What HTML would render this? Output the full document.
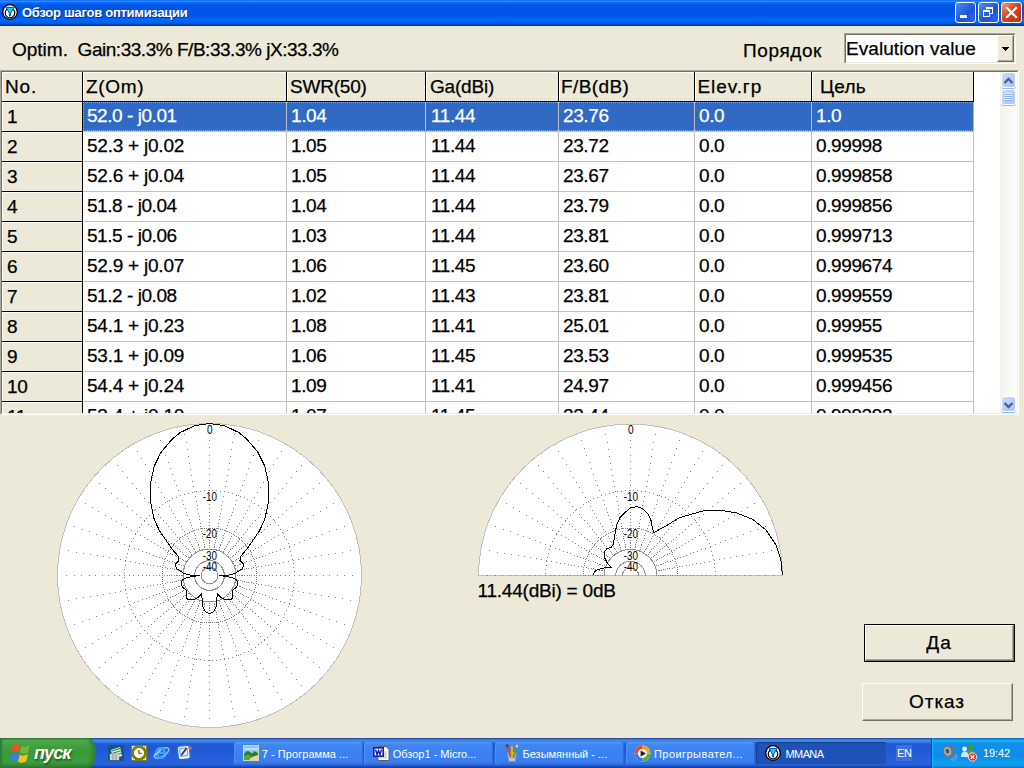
<!DOCTYPE html>
<html><head><meta charset="utf-8"><title>MMANA</title>
<style>
*{box-sizing:border-box;margin:0;padding:0}
html,body{width:1024px;height:768px;overflow:hidden;background:#ECE9D8;font-family:"Liberation Sans",sans-serif;color:#000}
div,span,svg{position:absolute}
.t{white-space:nowrap;font-size:19px;line-height:22px;letter-spacing:-0.4px;-webkit-text-stroke:0.25px currentColor}
#title{left:0;top:0;width:1024px;height:26px;background:linear-gradient(to bottom,#0058ee 0%,#3593ff 4%,#288eff 6%,#127dff 8%,#036ffc 10%,#0262ee 14%,#0057e5 20%,#0054e3 24%,#0055eb 56%,#005bf5 66%,#026afe 76%,#0062ef 86%,#0052d6 92%,#0040ab 96%,#003092 100%)}
#title .tt{left:22px;top:5px;font-weight:bold;font-size:13px;line-height:16px;color:#fff;white-space:nowrap;text-shadow:1px 1px 0 #0F2F86;letter-spacing:-0.27px}
.cb{top:2px;width:21px;height:21px;border:1px solid #fff;border-radius:3px}
#grid{left:0;top:70px;width:1019px;height:345px;background:#fff;border-top:1px solid #ACA899;border-left:1px solid #ACA899;border-bottom:1px solid #fff;border-right:1px solid #fff;overflow:hidden}
#gi{left:0;top:0;width:1017px;height:343px;border-top:1px solid #716F64;border-left:1px solid #716F64;border-right:1px solid #F1EFE2;border-bottom:1px solid #F1EFE2;overflow:hidden;background:#fff}
.hc{background:#ECE9D8;border-top:1px solid #fff;border-left:1px solid #fff;overflow:hidden}
.hc .t,.c .t{left:3px;top:3px}
.c{overflow:hidden}
.bl{background:#000}
.gl{background:#C0C0C0}
.btn{background:#ECE9D8;border:1px solid;border-color:#fff #716F64 #716F64 #fff;box-shadow:inset -1px -1px 0 #ACA899}
.btn .t{left:0;right:0;text-align:center}
</style></head><body>

<div id="title"><div class="tt">Обзор шагов оптимизации</div>
<svg style="left:2px;top:4px" width="16" height="16" viewBox="0 0 16 16"><circle cx="8" cy="8" r="7.3" fill="#fff" stroke="#000" stroke-width="1.3"/><circle cx="8" cy="9" r="4.8" fill="none" stroke="#000" stroke-width="1.2"/><path d="M4 3.4h8L8.7 9v3H7.3V9z" fill="#00E0E8" stroke="#1030D0" stroke-width="0.9"/></svg>
<div class="cb" style="left:955px;background:linear-gradient(135deg,#4A8CF8,#1C54D8 60%,#2F6AF0)"><div style="left:4px;top:12px;width:7px;height:3px;background:#fff"></div></div>
<div class="cb" style="left:978px;background:linear-gradient(135deg,#4A8CF8,#1C54D8 60%,#2F6AF0)"><div style="left:7px;top:4px;width:7px;height:7px;border:1px solid #fff;border-top-width:2px"></div><div style="left:4px;top:7px;width:7px;height:7px;border:1px solid #fff;border-top-width:2px;background:#2A60E0"></div></div>
<div class="cb" style="left:1001px;background:linear-gradient(135deg,#F0A080,#D8441C 45%,#C03010)"><svg style="left:0;top:0" width="19" height="19"><path d="M5 5L14 14M14 5L5 14" stroke="#fff" stroke-width="2.2" stroke-linecap="square"/></svg></div>
</div>
<div class="t" style="left:12px;top:39px;letter-spacing:-0.47px"><span style="position:static;letter-spacing:0">Optim.</span>&nbsp; Gain:33.3% F/B:33.3% jX:33.3%</div>
<div class="t" style="left:743px;top:40px;letter-spacing:0.6px">Порядок</div>
<div style="left:844px;top:33px;width:172px;height:31px;background:#fff;border:1px solid;border-color:#ACA899 #fff #fff #ACA899"><div style="left:0;top:0;width:170px;height:29px;border:1px solid;border-color:#716F64 #ECE9D8 #ECE9D8 #716F64"></div><div class="t" style="left:1px;top:4px;letter-spacing:0.06px">Evalution value</div><div class="btn" style="left:152px;top:1px;width:17px;height:27px"><svg style="left:4px;top:11px" width="7" height="4" shape-rendering="crispEdges"><path d="M0 0h7v1h-1v1h-1v1h-1v1h-1v-1h-1v-1h-1v-1h-1z" fill="#000"/></svg></div></div>
<div id="grid"><div id="gi">
<div class="hc" style="left:0px;top:0px;width:80px;height:29px;"><div class="t" style="left:2px;letter-spacing:0.8px">No.</div></div>
<div class="bl" style="left:80px;top:0px;width:1px;height:30px;"></div>
<div class="hc" style="left:81px;top:0px;width:203px;height:29px;"><div class="t" style="left:2px;letter-spacing:0.7px">Z(Om)</div></div>
<div class="bl" style="left:284px;top:0px;width:1px;height:30px;"></div>
<div class="hc" style="left:285px;top:0px;width:138px;height:29px;"><div class="t" style="left:2px;letter-spacing:-0.2px">SWR(50)</div></div>
<div class="bl" style="left:423px;top:0px;width:1px;height:30px;"></div>
<div class="hc" style="left:424px;top:0px;width:132px;height:29px;"><div class="t" style="left:3px;letter-spacing:-0.2px">Ga(dBi)</div></div>
<div class="bl" style="left:556px;top:0px;width:1px;height:30px;"></div>
<div class="hc" style="left:557px;top:0px;width:135px;height:29px;"><div class="t" style="left:1px;letter-spacing:0.4px">F/B(dB)</div></div>
<div class="bl" style="left:692px;top:0px;width:1px;height:30px;"></div>
<div class="hc" style="left:693px;top:0px;width:116px;height:29px;"><div class="t" style="left:1.5px;letter-spacing:0.9px">Elev.гр</div></div>
<div class="bl" style="left:809px;top:0px;width:1px;height:30px;"></div>
<div class="hc" style="left:810px;top:0px;width:161px;height:29px;"><div class="t" style="left:7px;letter-spacing:0.2px">Цель</div></div>
<div class="bl" style="left:971px;top:0px;width:1px;height:30px;"></div>
<div class="bl" style="left:0px;top:29px;width:972px;height:1px;"></div>
<div class="hc" style="left:0px;top:30px;width:80px;height:29px;"><div class="t" style="left:4px">1</div></div>
<div class="bl" style="left:80px;top:30px;width:1px;height:30px;"></div>
<div class="bl" style="left:0px;top:59px;width:81px;height:1px;"></div>
<div class="c" style="left:81px;top:30px;width:203px;height:29px;background:#316AC5;color:#fff;"><div class="t" style="left:4px;letter-spacing:-0.45px;">52.0 - j0.01</div></div>
<div class="gl" style="left:284px;top:30px;width:1px;height:30px;"></div>
<div class="c" style="left:285px;top:30px;width:138px;height:29px;background:#316AC5;color:#fff;"><div class="t" style="left:4px;">1.04</div></div>
<div class="gl" style="left:423px;top:30px;width:1px;height:30px;"></div>
<div class="c" style="left:424px;top:30px;width:132px;height:29px;background:#316AC5;color:#fff;"><div class="t" style="left:5px;">11.44</div></div>
<div class="gl" style="left:556px;top:30px;width:1px;height:30px;"></div>
<div class="c" style="left:557px;top:30px;width:135px;height:29px;background:#316AC5;color:#fff;"><div class="t" style="left:4px;">23.76</div></div>
<div class="gl" style="left:692px;top:30px;width:1px;height:30px;"></div>
<div class="c" style="left:693px;top:30px;width:116px;height:29px;background:#316AC5;color:#fff;"><div class="t" style="left:4px;">0.0</div></div>
<div class="gl" style="left:809px;top:30px;width:1px;height:30px;"></div>
<div class="c" style="left:810px;top:30px;width:161px;height:29px;background:#316AC5;color:#fff;"><div class="t" style="left:4px;">1.0</div></div>
<div class="gl" style="left:971px;top:30px;width:1px;height:30px;"></div>
<div class="gl" style="left:81px;top:59px;width:891px;height:1px;"></div>
<div class="" style="left:81px;top:30px;width:891px;height:29px;border:1px dotted #E8A040;"></div>
<div class="hc" style="left:0px;top:60px;width:80px;height:29px;"><div class="t" style="left:4px">2</div></div>
<div class="bl" style="left:80px;top:60px;width:1px;height:30px;"></div>
<div class="bl" style="left:0px;top:89px;width:81px;height:1px;"></div>
<div class="c" style="left:81px;top:60px;width:203px;height:29px;"><div class="t" style="left:4px;letter-spacing:-0.23px;">52.3 + j0.02</div></div>
<div class="gl" style="left:284px;top:60px;width:1px;height:30px;"></div>
<div class="c" style="left:285px;top:60px;width:138px;height:29px;"><div class="t" style="left:4px;">1.05</div></div>
<div class="gl" style="left:423px;top:60px;width:1px;height:30px;"></div>
<div class="c" style="left:424px;top:60px;width:132px;height:29px;"><div class="t" style="left:5px;">11.44</div></div>
<div class="gl" style="left:556px;top:60px;width:1px;height:30px;"></div>
<div class="c" style="left:557px;top:60px;width:135px;height:29px;"><div class="t" style="left:4px;">23.72</div></div>
<div class="gl" style="left:692px;top:60px;width:1px;height:30px;"></div>
<div class="c" style="left:693px;top:60px;width:116px;height:29px;"><div class="t" style="left:4px;">0.0</div></div>
<div class="gl" style="left:809px;top:60px;width:1px;height:30px;"></div>
<div class="c" style="left:810px;top:60px;width:161px;height:29px;"><div class="t" style="left:4px;">0.99998</div></div>
<div class="gl" style="left:971px;top:60px;width:1px;height:30px;"></div>
<div class="gl" style="left:81px;top:89px;width:891px;height:1px;"></div>
<div class="hc" style="left:0px;top:90px;width:80px;height:29px;"><div class="t" style="left:4px">3</div></div>
<div class="bl" style="left:80px;top:90px;width:1px;height:30px;"></div>
<div class="bl" style="left:0px;top:119px;width:81px;height:1px;"></div>
<div class="c" style="left:81px;top:90px;width:203px;height:29px;"><div class="t" style="left:4px;letter-spacing:-0.23px;">52.6 + j0.04</div></div>
<div class="gl" style="left:284px;top:90px;width:1px;height:30px;"></div>
<div class="c" style="left:285px;top:90px;width:138px;height:29px;"><div class="t" style="left:4px;">1.05</div></div>
<div class="gl" style="left:423px;top:90px;width:1px;height:30px;"></div>
<div class="c" style="left:424px;top:90px;width:132px;height:29px;"><div class="t" style="left:5px;">11.44</div></div>
<div class="gl" style="left:556px;top:90px;width:1px;height:30px;"></div>
<div class="c" style="left:557px;top:90px;width:135px;height:29px;"><div class="t" style="left:4px;">23.67</div></div>
<div class="gl" style="left:692px;top:90px;width:1px;height:30px;"></div>
<div class="c" style="left:693px;top:90px;width:116px;height:29px;"><div class="t" style="left:4px;">0.0</div></div>
<div class="gl" style="left:809px;top:90px;width:1px;height:30px;"></div>
<div class="c" style="left:810px;top:90px;width:161px;height:29px;"><div class="t" style="left:4px;">0.999858</div></div>
<div class="gl" style="left:971px;top:90px;width:1px;height:30px;"></div>
<div class="gl" style="left:81px;top:119px;width:891px;height:1px;"></div>
<div class="hc" style="left:0px;top:120px;width:80px;height:29px;"><div class="t" style="left:4px">4</div></div>
<div class="bl" style="left:80px;top:120px;width:1px;height:30px;"></div>
<div class="bl" style="left:0px;top:149px;width:81px;height:1px;"></div>
<div class="c" style="left:81px;top:120px;width:203px;height:29px;"><div class="t" style="left:4px;letter-spacing:-0.45px;">51.8 - j0.04</div></div>
<div class="gl" style="left:284px;top:120px;width:1px;height:30px;"></div>
<div class="c" style="left:285px;top:120px;width:138px;height:29px;"><div class="t" style="left:4px;">1.04</div></div>
<div class="gl" style="left:423px;top:120px;width:1px;height:30px;"></div>
<div class="c" style="left:424px;top:120px;width:132px;height:29px;"><div class="t" style="left:5px;">11.44</div></div>
<div class="gl" style="left:556px;top:120px;width:1px;height:30px;"></div>
<div class="c" style="left:557px;top:120px;width:135px;height:29px;"><div class="t" style="left:4px;">23.79</div></div>
<div class="gl" style="left:692px;top:120px;width:1px;height:30px;"></div>
<div class="c" style="left:693px;top:120px;width:116px;height:29px;"><div class="t" style="left:4px;">0.0</div></div>
<div class="gl" style="left:809px;top:120px;width:1px;height:30px;"></div>
<div class="c" style="left:810px;top:120px;width:161px;height:29px;"><div class="t" style="left:4px;">0.999856</div></div>
<div class="gl" style="left:971px;top:120px;width:1px;height:30px;"></div>
<div class="gl" style="left:81px;top:149px;width:891px;height:1px;"></div>
<div class="hc" style="left:0px;top:150px;width:80px;height:29px;"><div class="t" style="left:4px">5</div></div>
<div class="bl" style="left:80px;top:150px;width:1px;height:30px;"></div>
<div class="bl" style="left:0px;top:179px;width:81px;height:1px;"></div>
<div class="c" style="left:81px;top:150px;width:203px;height:29px;"><div class="t" style="left:4px;letter-spacing:-0.45px;">51.5 - j0.06</div></div>
<div class="gl" style="left:284px;top:150px;width:1px;height:30px;"></div>
<div class="c" style="left:285px;top:150px;width:138px;height:29px;"><div class="t" style="left:4px;">1.03</div></div>
<div class="gl" style="left:423px;top:150px;width:1px;height:30px;"></div>
<div class="c" style="left:424px;top:150px;width:132px;height:29px;"><div class="t" style="left:5px;">11.44</div></div>
<div class="gl" style="left:556px;top:150px;width:1px;height:30px;"></div>
<div class="c" style="left:557px;top:150px;width:135px;height:29px;"><div class="t" style="left:4px;">23.81</div></div>
<div class="gl" style="left:692px;top:150px;width:1px;height:30px;"></div>
<div class="c" style="left:693px;top:150px;width:116px;height:29px;"><div class="t" style="left:4px;">0.0</div></div>
<div class="gl" style="left:809px;top:150px;width:1px;height:30px;"></div>
<div class="c" style="left:810px;top:150px;width:161px;height:29px;"><div class="t" style="left:4px;">0.999713</div></div>
<div class="gl" style="left:971px;top:150px;width:1px;height:30px;"></div>
<div class="gl" style="left:81px;top:179px;width:891px;height:1px;"></div>
<div class="hc" style="left:0px;top:180px;width:80px;height:29px;"><div class="t" style="left:4px">6</div></div>
<div class="bl" style="left:80px;top:180px;width:1px;height:30px;"></div>
<div class="bl" style="left:0px;top:209px;width:81px;height:1px;"></div>
<div class="c" style="left:81px;top:180px;width:203px;height:29px;"><div class="t" style="left:4px;letter-spacing:-0.23px;">52.9 + j0.07</div></div>
<div class="gl" style="left:284px;top:180px;width:1px;height:30px;"></div>
<div class="c" style="left:285px;top:180px;width:138px;height:29px;"><div class="t" style="left:4px;">1.06</div></div>
<div class="gl" style="left:423px;top:180px;width:1px;height:30px;"></div>
<div class="c" style="left:424px;top:180px;width:132px;height:29px;"><div class="t" style="left:5px;">11.45</div></div>
<div class="gl" style="left:556px;top:180px;width:1px;height:30px;"></div>
<div class="c" style="left:557px;top:180px;width:135px;height:29px;"><div class="t" style="left:4px;">23.60</div></div>
<div class="gl" style="left:692px;top:180px;width:1px;height:30px;"></div>
<div class="c" style="left:693px;top:180px;width:116px;height:29px;"><div class="t" style="left:4px;">0.0</div></div>
<div class="gl" style="left:809px;top:180px;width:1px;height:30px;"></div>
<div class="c" style="left:810px;top:180px;width:161px;height:29px;"><div class="t" style="left:4px;">0.999674</div></div>
<div class="gl" style="left:971px;top:180px;width:1px;height:30px;"></div>
<div class="gl" style="left:81px;top:209px;width:891px;height:1px;"></div>
<div class="hc" style="left:0px;top:210px;width:80px;height:29px;"><div class="t" style="left:4px">7</div></div>
<div class="bl" style="left:80px;top:210px;width:1px;height:30px;"></div>
<div class="bl" style="left:0px;top:239px;width:81px;height:1px;"></div>
<div class="c" style="left:81px;top:210px;width:203px;height:29px;"><div class="t" style="left:4px;letter-spacing:-0.45px;">51.2 - j0.08</div></div>
<div class="gl" style="left:284px;top:210px;width:1px;height:30px;"></div>
<div class="c" style="left:285px;top:210px;width:138px;height:29px;"><div class="t" style="left:4px;">1.02</div></div>
<div class="gl" style="left:423px;top:210px;width:1px;height:30px;"></div>
<div class="c" style="left:424px;top:210px;width:132px;height:29px;"><div class="t" style="left:5px;">11.43</div></div>
<div class="gl" style="left:556px;top:210px;width:1px;height:30px;"></div>
<div class="c" style="left:557px;top:210px;width:135px;height:29px;"><div class="t" style="left:4px;">23.81</div></div>
<div class="gl" style="left:692px;top:210px;width:1px;height:30px;"></div>
<div class="c" style="left:693px;top:210px;width:116px;height:29px;"><div class="t" style="left:4px;">0.0</div></div>
<div class="gl" style="left:809px;top:210px;width:1px;height:30px;"></div>
<div class="c" style="left:810px;top:210px;width:161px;height:29px;"><div class="t" style="left:4px;">0.999559</div></div>
<div class="gl" style="left:971px;top:210px;width:1px;height:30px;"></div>
<div class="gl" style="left:81px;top:239px;width:891px;height:1px;"></div>
<div class="hc" style="left:0px;top:240px;width:80px;height:29px;"><div class="t" style="left:4px">8</div></div>
<div class="bl" style="left:80px;top:240px;width:1px;height:30px;"></div>
<div class="bl" style="left:0px;top:269px;width:81px;height:1px;"></div>
<div class="c" style="left:81px;top:240px;width:203px;height:29px;"><div class="t" style="left:4px;letter-spacing:-0.23px;">54.1 + j0.23</div></div>
<div class="gl" style="left:284px;top:240px;width:1px;height:30px;"></div>
<div class="c" style="left:285px;top:240px;width:138px;height:29px;"><div class="t" style="left:4px;">1.08</div></div>
<div class="gl" style="left:423px;top:240px;width:1px;height:30px;"></div>
<div class="c" style="left:424px;top:240px;width:132px;height:29px;"><div class="t" style="left:5px;">11.41</div></div>
<div class="gl" style="left:556px;top:240px;width:1px;height:30px;"></div>
<div class="c" style="left:557px;top:240px;width:135px;height:29px;"><div class="t" style="left:4px;">25.01</div></div>
<div class="gl" style="left:692px;top:240px;width:1px;height:30px;"></div>
<div class="c" style="left:693px;top:240px;width:116px;height:29px;"><div class="t" style="left:4px;">0.0</div></div>
<div class="gl" style="left:809px;top:240px;width:1px;height:30px;"></div>
<div class="c" style="left:810px;top:240px;width:161px;height:29px;"><div class="t" style="left:4px;">0.99955</div></div>
<div class="gl" style="left:971px;top:240px;width:1px;height:30px;"></div>
<div class="gl" style="left:81px;top:269px;width:891px;height:1px;"></div>
<div class="hc" style="left:0px;top:270px;width:80px;height:29px;"><div class="t" style="left:4px">9</div></div>
<div class="bl" style="left:80px;top:270px;width:1px;height:30px;"></div>
<div class="bl" style="left:0px;top:299px;width:81px;height:1px;"></div>
<div class="c" style="left:81px;top:270px;width:203px;height:29px;"><div class="t" style="left:4px;letter-spacing:-0.23px;">53.1 + j0.09</div></div>
<div class="gl" style="left:284px;top:270px;width:1px;height:30px;"></div>
<div class="c" style="left:285px;top:270px;width:138px;height:29px;"><div class="t" style="left:4px;">1.06</div></div>
<div class="gl" style="left:423px;top:270px;width:1px;height:30px;"></div>
<div class="c" style="left:424px;top:270px;width:132px;height:29px;"><div class="t" style="left:5px;">11.45</div></div>
<div class="gl" style="left:556px;top:270px;width:1px;height:30px;"></div>
<div class="c" style="left:557px;top:270px;width:135px;height:29px;"><div class="t" style="left:4px;">23.53</div></div>
<div class="gl" style="left:692px;top:270px;width:1px;height:30px;"></div>
<div class="c" style="left:693px;top:270px;width:116px;height:29px;"><div class="t" style="left:4px;">0.0</div></div>
<div class="gl" style="left:809px;top:270px;width:1px;height:30px;"></div>
<div class="c" style="left:810px;top:270px;width:161px;height:29px;"><div class="t" style="left:4px;">0.999535</div></div>
<div class="gl" style="left:971px;top:270px;width:1px;height:30px;"></div>
<div class="gl" style="left:81px;top:299px;width:891px;height:1px;"></div>
<div class="hc" style="left:0px;top:300px;width:80px;height:29px;"><div class="t" style="left:4px">10</div></div>
<div class="bl" style="left:80px;top:300px;width:1px;height:30px;"></div>
<div class="bl" style="left:0px;top:329px;width:81px;height:1px;"></div>
<div class="c" style="left:81px;top:300px;width:203px;height:29px;"><div class="t" style="left:4px;letter-spacing:-0.23px;">54.4 + j0.24</div></div>
<div class="gl" style="left:284px;top:300px;width:1px;height:30px;"></div>
<div class="c" style="left:285px;top:300px;width:138px;height:29px;"><div class="t" style="left:4px;">1.09</div></div>
<div class="gl" style="left:423px;top:300px;width:1px;height:30px;"></div>
<div class="c" style="left:424px;top:300px;width:132px;height:29px;"><div class="t" style="left:5px;">11.41</div></div>
<div class="gl" style="left:556px;top:300px;width:1px;height:30px;"></div>
<div class="c" style="left:557px;top:300px;width:135px;height:29px;"><div class="t" style="left:4px;">24.97</div></div>
<div class="gl" style="left:692px;top:300px;width:1px;height:30px;"></div>
<div class="c" style="left:693px;top:300px;width:116px;height:29px;"><div class="t" style="left:4px;">0.0</div></div>
<div class="gl" style="left:809px;top:300px;width:1px;height:30px;"></div>
<div class="c" style="left:810px;top:300px;width:161px;height:29px;"><div class="t" style="left:4px;">0.999456</div></div>
<div class="gl" style="left:971px;top:300px;width:1px;height:30px;"></div>
<div class="gl" style="left:81px;top:329px;width:891px;height:1px;"></div>
<div class="hc" style="left:0px;top:330px;width:80px;height:29px;"><div class="t" style="left:4px">11</div></div>
<div class="bl" style="left:80px;top:330px;width:1px;height:30px;"></div>
<div class="bl" style="left:0px;top:359px;width:81px;height:1px;"></div>
<div class="c" style="left:81px;top:330px;width:203px;height:29px;"><div class="t" style="left:4px;letter-spacing:-0.23px;">53.4 + j0.10</div></div>
<div class="gl" style="left:284px;top:330px;width:1px;height:30px;"></div>
<div class="c" style="left:285px;top:330px;width:138px;height:29px;"><div class="t" style="left:4px;">1.07</div></div>
<div class="gl" style="left:423px;top:330px;width:1px;height:30px;"></div>
<div class="c" style="left:424px;top:330px;width:132px;height:29px;"><div class="t" style="left:5px;">11.45</div></div>
<div class="gl" style="left:556px;top:330px;width:1px;height:30px;"></div>
<div class="c" style="left:557px;top:330px;width:135px;height:29px;"><div class="t" style="left:4px;">23.44</div></div>
<div class="gl" style="left:692px;top:330px;width:1px;height:30px;"></div>
<div class="c" style="left:693px;top:330px;width:116px;height:29px;"><div class="t" style="left:4px;">0.0</div></div>
<div class="gl" style="left:809px;top:330px;width:1px;height:30px;"></div>
<div class="c" style="left:810px;top:330px;width:161px;height:29px;"><div class="t" style="left:4px;">0.999393</div></div>
<div class="gl" style="left:971px;top:330px;width:1px;height:30px;"></div>
<div class="gl" style="left:81px;top:359px;width:891px;height:1px;"></div>
</div>
<div style="left:999px;top:1px;width:17px;height:341px;background:linear-gradient(to right,#F3F1EC,#FEFEFB)"></div>
<div style="left:1000px;top:1px;width:15px;height:16px;border:1px solid #fff;border-radius:3px;background:linear-gradient(135deg,#CCDAFD,#BBCDF9 50%,#AEC4F5);box-shadow:0 1px 0 #9DB6EA"><svg style="left:1px;top:4px" width="11" height="8"><path d="M1.5 6L5.5 2L9.5 6" fill="none" stroke="#4D6185" stroke-width="2.4"/></svg></div>
<div style="left:1000px;top:18px;width:15px;height:16px;border:1px solid #fff;border-radius:3px;background:linear-gradient(135deg,#CCDAFD,#BBCDF9 50%,#AEC4F5);box-shadow:0 1px 0 #9DB6EA"><div style="left:3px;top:3px;width:7px;height:1px;background:#EEF4FE;box-shadow:0 1px 0 #8CB0F8,0 2px 0 #EEF4FE,0 3px 0 #8CB0F8,0 4px 0 #EEF4FE,0 5px 0 #8CB0F8,0 6px 0 #EEF4FE,0 7px 0 #8CB0F8"></div></div>
<div style="left:1000px;top:325px;width:15px;height:16px;border:1px solid #fff;border-radius:3px;background:linear-gradient(135deg,#CCDAFD,#BBCDF9 50%,#AEC4F5);box-shadow:0 1px 0 #9DB6EA"><svg style="left:1px;top:4px" width="11" height="8"><path d="M1.5 2L5.5 6L9.5 2" fill="none" stroke="#4D6185" stroke-width="2.4"/></svg></div>
</div>
<svg style="left:56px;top:422px" width="307" height="307" viewBox="56 422 307 307" shape-rendering="crispEdges"><circle cx="209.5" cy="575.5" r="152" fill="#fff" stroke="#C0C0C0" stroke-width="1"/><path d="M352 575h1v1h-1zM344 575h1v1h-1zM337 575h1v1h-1zM329 575h1v1h-1zM323 575h1v1h-1zM316 575h1v1h-1zM310 575h1v1h-1zM304 575h1v1h-1zM299 575h1v1h-1zM294 575h1v1h-1zM289 575h1v1h-1zM285 575h1v1h-1zM280 575h1v1h-1zM276 575h1v1h-1zM272 575h1v1h-1zM269 575h1v1h-1zM265 575h1v1h-1zM262 575h1v1h-1zM259 575h1v1h-1zM256 575h1v1h-1zM254 575h1v1h-1zM251 575h1v1h-1zM249 575h1v1h-1zM247 575h1v1h-1zM244 575h1v1h-1zM242 575h1v1h-1zM241 575h1v1h-1zM239 575h1v1h-1zM237 575h1v1h-1zM235 575h1v1h-1zM350 550h1v1h-1zM342 552h1v1h-1zM335 553h1v1h-1zM328 554h1v1h-1zM321 555h1v1h-1zM315 556h1v1h-1zM309 557h1v1h-1zM303 558h1v1h-1zM298 559h1v1h-1zM293 560h1v1h-1zM288 561h1v1h-1zM283 562h1v1h-1zM279 563h1v1h-1zM275 563h1v1h-1zM271 564h1v1h-1zM268 565h1v1h-1zM265 565h1v1h-1zM261 566h1v1h-1zM258 566h1v1h-1zM256 567h1v1h-1zM253 567h1v1h-1zM251 568h1v1h-1zM248 568h1v1h-1zM246 568h1v1h-1zM244 569h1v1h-1zM242 569h1v1h-1zM240 570h1v1h-1zM238 570h1v1h-1zM237 570h1v1h-1zM235 570h1v1h-1zM344 526h1v1h-1zM336 529h1v1h-1zM329 531h1v1h-1zM322 534h1v1h-1zM316 536h1v1h-1zM310 538h1v1h-1zM304 540h1v1h-1zM299 542h1v1h-1zM294 544h1v1h-1zM289 546h1v1h-1zM284 548h1v1h-1zM280 549h1v1h-1zM276 551h1v1h-1zM272 552h1v1h-1zM269 553h1v1h-1zM265 555h1v1h-1zM262 556h1v1h-1zM259 557h1v1h-1zM256 558h1v1h-1zM254 559h1v1h-1zM251 560h1v1h-1zM249 561h1v1h-1zM246 561h1v1h-1zM244 562h1v1h-1zM242 563h1v1h-1zM240 564h1v1h-1zM239 564h1v1h-1zM237 565h1v1h-1zM235 565h1v1h-1zM234 566h1v1h-1zM333 503h1v1h-1zM326 507h1v1h-1zM320 511h1v1h-1zM313 515h1v1h-1zM307 518h1v1h-1zM302 521h1v1h-1zM297 524h1v1h-1zM292 527h1v1h-1zM287 530h1v1h-1zM283 533h1v1h-1zM278 535h1v1h-1zM274 537h1v1h-1zM271 539h1v1h-1zM267 541h1v1h-1zM264 543h1v1h-1zM261 545h1v1h-1zM258 547h1v1h-1zM255 548h1v1h-1zM253 550h1v1h-1zM250 551h1v1h-1zM248 553h1v1h-1zM246 554h1v1h-1zM243 555h1v1h-1zM242 556h1v1h-1zM240 557h1v1h-1zM238 558h1v1h-1zM236 559h1v1h-1zM235 560h1v1h-1zM233 561h1v1h-1zM232 562h1v1h-1zM319 483h1v1h-1zM313 488h1v1h-1zM307 493h1v1h-1zM301 498h1v1h-1zM296 502h1v1h-1zM291 506h1v1h-1zM286 510h1v1h-1zM282 514h1v1h-1zM278 517h1v1h-1zM274 520h1v1h-1zM270 524h1v1h-1zM267 526h1v1h-1zM264 529h1v1h-1zM261 532h1v1h-1zM258 534h1v1h-1zM255 537h1v1h-1zM252 539h1v1h-1zM250 541h1v1h-1zM247 543h1v1h-1zM245 545h1v1h-1zM243 546h1v1h-1zM241 548h1v1h-1zM239 549h1v1h-1zM238 551h1v1h-1zM236 552h1v1h-1zM235 554h1v1h-1zM233 555h1v1h-1zM232 556h1v1h-1zM230 557h1v1h-1zM229 558h1v1h-1zM301 465h1v1h-1zM296 471h1v1h-1zM291 477h1v1h-1zM286 483h1v1h-1zM282 488h1v1h-1zM278 493h1v1h-1zM274 498h1v1h-1zM270 502h1v1h-1zM267 506h1v1h-1zM264 510h1v1h-1zM260 514h1v1h-1zM258 517h1v1h-1zM255 520h1v1h-1zM252 523h1v1h-1zM250 526h1v1h-1zM247 529h1v1h-1zM245 532h1v1h-1zM243 534h1v1h-1zM241 537h1v1h-1zM239 539h1v1h-1zM238 541h1v1h-1zM236 543h1v1h-1zM235 545h1v1h-1zM233 546h1v1h-1zM232 548h1v1h-1zM230 549h1v1h-1zM229 551h1v1h-1zM228 552h1v1h-1zM227 554h1v1h-1zM226 555h1v1h-1zM281 451h1v1h-1zM277 458h1v1h-1zM273 464h1v1h-1zM269 471h1v1h-1zM266 477h1v1h-1zM263 482h1v1h-1zM260 487h1v1h-1zM257 492h1v1h-1zM254 497h1v1h-1zM251 501h1v1h-1zM249 506h1v1h-1zM247 510h1v1h-1zM245 513h1v1h-1zM243 517h1v1h-1zM241 520h1v1h-1zM239 523h1v1h-1zM237 526h1v1h-1zM236 529h1v1h-1zM234 531h1v1h-1zM233 534h1v1h-1zM231 536h1v1h-1zM230 538h1v1h-1zM229 541h1v1h-1zM228 542h1v1h-1zM227 544h1v1h-1zM226 546h1v1h-1zM225 548h1v1h-1zM224 549h1v1h-1zM223 551h1v1h-1zM222 552h1v1h-1zM258 440h1v1h-1zM255 448h1v1h-1zM253 455h1v1h-1zM250 462h1v1h-1zM248 468h1v1h-1zM246 474h1v1h-1zM244 480h1v1h-1zM242 485h1v1h-1zM240 490h1v1h-1zM238 495h1v1h-1zM236 500h1v1h-1zM235 504h1v1h-1zM233 508h1v1h-1zM232 512h1v1h-1zM231 515h1v1h-1zM229 519h1v1h-1zM228 522h1v1h-1zM227 525h1v1h-1zM226 528h1v1h-1zM225 530h1v1h-1zM224 533h1v1h-1zM223 535h1v1h-1zM223 538h1v1h-1zM222 540h1v1h-1zM221 542h1v1h-1zM220 544h1v1h-1zM220 545h1v1h-1zM219 547h1v1h-1zM219 549h1v1h-1zM218 550h1v1h-1zM234 434h1v1h-1zM232 442h1v1h-1zM231 449h1v1h-1zM230 456h1v1h-1zM229 463h1v1h-1zM228 469h1v1h-1zM227 475h1v1h-1zM226 481h1v1h-1zM225 486h1v1h-1zM224 491h1v1h-1zM223 496h1v1h-1zM222 501h1v1h-1zM221 505h1v1h-1zM221 509h1v1h-1zM220 513h1v1h-1zM219 516h1v1h-1zM219 519h1v1h-1zM218 523h1v1h-1zM218 526h1v1h-1zM217 528h1v1h-1zM217 531h1v1h-1zM216 533h1v1h-1zM216 536h1v1h-1zM216 538h1v1h-1zM215 540h1v1h-1zM215 542h1v1h-1zM214 544h1v1h-1zM214 546h1v1h-1zM214 547h1v1h-1zM214 549h1v1h-1zM209 432h1v1h-1zM209 440h1v1h-1zM209 447h1v1h-1zM209 455h1v1h-1zM209 461h1v1h-1zM209 468h1v1h-1zM209 474h1v1h-1zM209 480h1v1h-1zM209 485h1v1h-1zM209 490h1v1h-1zM209 495h1v1h-1zM209 499h1v1h-1zM209 504h1v1h-1zM209 508h1v1h-1zM209 512h1v1h-1zM209 515h1v1h-1zM209 519h1v1h-1zM209 522h1v1h-1zM209 525h1v1h-1zM209 528h1v1h-1zM209 530h1v1h-1zM209 533h1v1h-1zM209 535h1v1h-1zM209 537h1v1h-1zM209 540h1v1h-1zM209 542h1v1h-1zM209 543h1v1h-1zM209 545h1v1h-1zM209 547h1v1h-1zM209 549h1v1h-1zM184 434h1v1h-1zM186 442h1v1h-1zM187 449h1v1h-1zM188 456h1v1h-1zM189 463h1v1h-1zM190 469h1v1h-1zM191 475h1v1h-1zM192 481h1v1h-1zM193 486h1v1h-1zM194 491h1v1h-1zM195 496h1v1h-1zM196 501h1v1h-1zM197 505h1v1h-1zM197 509h1v1h-1zM198 513h1v1h-1zM199 516h1v1h-1zM199 519h1v1h-1zM200 523h1v1h-1zM200 526h1v1h-1zM201 528h1v1h-1zM201 531h1v1h-1zM202 533h1v1h-1zM202 536h1v1h-1zM202 538h1v1h-1zM203 540h1v1h-1zM203 542h1v1h-1zM204 544h1v1h-1zM204 546h1v1h-1zM204 547h1v1h-1zM204 549h1v1h-1zM160 440h1v1h-1zM163 448h1v1h-1zM165 455h1v1h-1zM168 462h1v1h-1zM170 468h1v1h-1zM172 474h1v1h-1zM174 480h1v1h-1zM176 485h1v1h-1zM178 490h1v1h-1zM180 495h1v1h-1zM182 500h1v1h-1zM183 504h1v1h-1zM185 508h1v1h-1zM186 512h1v1h-1zM187 515h1v1h-1zM189 519h1v1h-1zM190 522h1v1h-1zM191 525h1v1h-1zM192 528h1v1h-1zM193 530h1v1h-1zM194 533h1v1h-1zM195 535h1v1h-1zM195 538h1v1h-1zM196 540h1v1h-1zM197 542h1v1h-1zM198 544h1v1h-1zM198 545h1v1h-1zM199 547h1v1h-1zM199 549h1v1h-1zM200 550h1v1h-1zM137 451h1v1h-1zM141 458h1v1h-1zM145 464h1v1h-1zM149 471h1v1h-1zM152 477h1v1h-1zM155 482h1v1h-1zM158 487h1v1h-1zM161 492h1v1h-1zM164 497h1v1h-1zM167 501h1v1h-1zM169 506h1v1h-1zM171 510h1v1h-1zM173 513h1v1h-1zM175 517h1v1h-1zM177 520h1v1h-1zM179 523h1v1h-1zM181 526h1v1h-1zM182 529h1v1h-1zM184 531h1v1h-1zM185 534h1v1h-1zM187 536h1v1h-1zM188 538h1v1h-1zM189 541h1v1h-1zM190 542h1v1h-1zM191 544h1v1h-1zM192 546h1v1h-1zM193 548h1v1h-1zM194 549h1v1h-1zM195 551h1v1h-1zM196 552h1v1h-1zM117 465h1v1h-1zM122 471h1v1h-1zM127 477h1v1h-1zM132 483h1v1h-1zM136 488h1v1h-1zM140 493h1v1h-1zM144 498h1v1h-1zM148 502h1v1h-1zM151 506h1v1h-1zM154 510h1v1h-1zM158 514h1v1h-1zM160 517h1v1h-1zM163 520h1v1h-1zM166 523h1v1h-1zM168 526h1v1h-1zM171 529h1v1h-1zM173 532h1v1h-1zM175 534h1v1h-1zM177 537h1v1h-1zM179 539h1v1h-1zM180 541h1v1h-1zM182 543h1v1h-1zM183 545h1v1h-1zM185 546h1v1h-1zM186 548h1v1h-1zM188 549h1v1h-1zM189 551h1v1h-1zM190 552h1v1h-1zM191 554h1v1h-1zM192 555h1v1h-1zM99 483h1v1h-1zM105 488h1v1h-1zM111 493h1v1h-1zM117 498h1v1h-1zM122 502h1v1h-1zM127 506h1v1h-1zM132 510h1v1h-1zM136 514h1v1h-1zM140 517h1v1h-1zM144 520h1v1h-1zM148 524h1v1h-1zM151 526h1v1h-1zM154 529h1v1h-1zM157 532h1v1h-1zM160 534h1v1h-1zM163 537h1v1h-1zM166 539h1v1h-1zM168 541h1v1h-1zM171 543h1v1h-1zM173 545h1v1h-1zM175 546h1v1h-1zM177 548h1v1h-1zM179 549h1v1h-1zM180 551h1v1h-1zM182 552h1v1h-1zM183 554h1v1h-1zM185 555h1v1h-1zM186 556h1v1h-1zM188 557h1v1h-1zM189 558h1v1h-1zM85 503h1v1h-1zM92 507h1v1h-1zM98 511h1v1h-1zM105 515h1v1h-1zM111 518h1v1h-1zM116 521h1v1h-1zM121 524h1v1h-1zM126 527h1v1h-1zM131 530h1v1h-1zM135 533h1v1h-1zM140 535h1v1h-1zM144 537h1v1h-1zM147 539h1v1h-1zM151 541h1v1h-1zM154 543h1v1h-1zM157 545h1v1h-1zM160 547h1v1h-1zM163 548h1v1h-1zM165 550h1v1h-1zM168 551h1v1h-1zM170 553h1v1h-1zM172 554h1v1h-1zM175 555h1v1h-1zM176 556h1v1h-1zM178 557h1v1h-1zM180 558h1v1h-1zM182 559h1v1h-1zM183 560h1v1h-1zM185 561h1v1h-1zM186 562h1v1h-1zM74 526h1v1h-1zM82 529h1v1h-1zM89 531h1v1h-1zM96 534h1v1h-1zM102 536h1v1h-1zM108 538h1v1h-1zM114 540h1v1h-1zM119 542h1v1h-1zM124 544h1v1h-1zM129 546h1v1h-1zM134 548h1v1h-1zM138 549h1v1h-1zM142 551h1v1h-1zM146 552h1v1h-1zM149 553h1v1h-1zM153 555h1v1h-1zM156 556h1v1h-1zM159 557h1v1h-1zM162 558h1v1h-1zM164 559h1v1h-1zM167 560h1v1h-1zM169 561h1v1h-1zM172 561h1v1h-1zM174 562h1v1h-1zM176 563h1v1h-1zM178 564h1v1h-1zM179 564h1v1h-1zM181 565h1v1h-1zM183 565h1v1h-1zM184 566h1v1h-1zM68 550h1v1h-1zM76 552h1v1h-1zM83 553h1v1h-1zM90 554h1v1h-1zM97 555h1v1h-1zM103 556h1v1h-1zM109 557h1v1h-1zM115 558h1v1h-1zM120 559h1v1h-1zM125 560h1v1h-1zM130 561h1v1h-1zM135 562h1v1h-1zM139 563h1v1h-1zM143 563h1v1h-1zM147 564h1v1h-1zM150 565h1v1h-1zM153 565h1v1h-1zM157 566h1v1h-1zM160 566h1v1h-1zM162 567h1v1h-1zM165 567h1v1h-1zM167 568h1v1h-1zM170 568h1v1h-1zM172 568h1v1h-1zM174 569h1v1h-1zM176 569h1v1h-1zM178 570h1v1h-1zM180 570h1v1h-1zM181 570h1v1h-1zM183 570h1v1h-1zM66 575h1v1h-1zM74 575h1v1h-1zM81 575h1v1h-1zM89 575h1v1h-1zM95 575h1v1h-1zM102 575h1v1h-1zM108 575h1v1h-1zM114 575h1v1h-1zM119 575h1v1h-1zM124 575h1v1h-1zM129 575h1v1h-1zM133 575h1v1h-1zM138 575h1v1h-1zM142 575h1v1h-1zM146 575h1v1h-1zM149 575h1v1h-1zM153 575h1v1h-1zM156 575h1v1h-1zM159 575h1v1h-1zM162 575h1v1h-1zM164 575h1v1h-1zM167 575h1v1h-1zM169 575h1v1h-1zM171 575h1v1h-1zM174 575h1v1h-1zM176 575h1v1h-1zM177 575h1v1h-1zM179 575h1v1h-1zM181 575h1v1h-1zM183 575h1v1h-1zM68 600h1v1h-1zM76 598h1v1h-1zM83 597h1v1h-1zM90 596h1v1h-1zM97 595h1v1h-1zM103 594h1v1h-1zM109 593h1v1h-1zM115 592h1v1h-1zM120 591h1v1h-1zM125 590h1v1h-1zM130 589h1v1h-1zM135 588h1v1h-1zM139 587h1v1h-1zM143 587h1v1h-1zM147 586h1v1h-1zM150 585h1v1h-1zM153 585h1v1h-1zM157 584h1v1h-1zM160 584h1v1h-1zM162 583h1v1h-1zM165 583h1v1h-1zM167 582h1v1h-1zM170 582h1v1h-1zM172 582h1v1h-1zM174 581h1v1h-1zM176 581h1v1h-1zM178 580h1v1h-1zM180 580h1v1h-1zM181 580h1v1h-1zM183 580h1v1h-1zM74 624h1v1h-1zM82 621h1v1h-1zM89 619h1v1h-1zM96 616h1v1h-1zM102 614h1v1h-1zM108 612h1v1h-1zM114 610h1v1h-1zM119 608h1v1h-1zM124 606h1v1h-1zM129 604h1v1h-1zM134 602h1v1h-1zM138 601h1v1h-1zM142 599h1v1h-1zM146 598h1v1h-1zM149 597h1v1h-1zM153 595h1v1h-1zM156 594h1v1h-1zM159 593h1v1h-1zM162 592h1v1h-1zM164 591h1v1h-1zM167 590h1v1h-1zM169 589h1v1h-1zM172 589h1v1h-1zM174 588h1v1h-1zM176 587h1v1h-1zM178 586h1v1h-1zM179 586h1v1h-1zM181 585h1v1h-1zM183 585h1v1h-1zM184 584h1v1h-1zM85 647h1v1h-1zM92 643h1v1h-1zM98 639h1v1h-1zM105 635h1v1h-1zM111 632h1v1h-1zM116 629h1v1h-1zM121 626h1v1h-1zM126 623h1v1h-1zM131 620h1v1h-1zM135 617h1v1h-1zM140 615h1v1h-1zM144 613h1v1h-1zM147 611h1v1h-1zM151 609h1v1h-1zM154 607h1v1h-1zM157 605h1v1h-1zM160 603h1v1h-1zM163 602h1v1h-1zM165 600h1v1h-1zM168 599h1v1h-1zM170 597h1v1h-1zM172 596h1v1h-1zM175 595h1v1h-1zM176 594h1v1h-1zM178 593h1v1h-1zM180 592h1v1h-1zM182 591h1v1h-1zM183 590h1v1h-1zM185 589h1v1h-1zM186 588h1v1h-1zM99 667h1v1h-1zM105 662h1v1h-1zM111 657h1v1h-1zM117 652h1v1h-1zM122 648h1v1h-1zM127 644h1v1h-1zM132 640h1v1h-1zM136 636h1v1h-1zM140 633h1v1h-1zM144 630h1v1h-1zM148 626h1v1h-1zM151 624h1v1h-1zM154 621h1v1h-1zM157 618h1v1h-1zM160 616h1v1h-1zM163 613h1v1h-1zM166 611h1v1h-1zM168 609h1v1h-1zM171 607h1v1h-1zM173 605h1v1h-1zM175 604h1v1h-1zM177 602h1v1h-1zM179 601h1v1h-1zM180 599h1v1h-1zM182 598h1v1h-1zM183 596h1v1h-1zM185 595h1v1h-1zM186 594h1v1h-1zM188 593h1v1h-1zM189 592h1v1h-1zM117 685h1v1h-1zM122 679h1v1h-1zM127 673h1v1h-1zM132 667h1v1h-1zM136 662h1v1h-1zM140 657h1v1h-1zM144 652h1v1h-1zM148 648h1v1h-1zM151 644h1v1h-1zM154 640h1v1h-1zM158 636h1v1h-1zM160 633h1v1h-1zM163 630h1v1h-1zM166 627h1v1h-1zM168 624h1v1h-1zM171 621h1v1h-1zM173 618h1v1h-1zM175 616h1v1h-1zM177 613h1v1h-1zM179 611h1v1h-1zM180 609h1v1h-1zM182 607h1v1h-1zM183 605h1v1h-1zM185 604h1v1h-1zM186 602h1v1h-1zM188 601h1v1h-1zM189 599h1v1h-1zM190 598h1v1h-1zM191 596h1v1h-1zM192 595h1v1h-1zM137 699h1v1h-1zM141 692h1v1h-1zM145 686h1v1h-1zM149 679h1v1h-1zM152 673h1v1h-1zM155 668h1v1h-1zM158 663h1v1h-1zM161 658h1v1h-1zM164 653h1v1h-1zM167 649h1v1h-1zM169 644h1v1h-1zM171 640h1v1h-1zM173 637h1v1h-1zM175 633h1v1h-1zM177 630h1v1h-1zM179 627h1v1h-1zM181 624h1v1h-1zM182 621h1v1h-1zM184 619h1v1h-1zM185 616h1v1h-1zM187 614h1v1h-1zM188 612h1v1h-1zM189 609h1v1h-1zM190 608h1v1h-1zM191 606h1v1h-1zM192 604h1v1h-1zM193 602h1v1h-1zM194 601h1v1h-1zM195 599h1v1h-1zM196 598h1v1h-1zM160 710h1v1h-1zM163 702h1v1h-1zM165 695h1v1h-1zM168 688h1v1h-1zM170 682h1v1h-1zM172 676h1v1h-1zM174 670h1v1h-1zM176 665h1v1h-1zM178 660h1v1h-1zM180 655h1v1h-1zM182 650h1v1h-1zM183 646h1v1h-1zM185 642h1v1h-1zM186 638h1v1h-1zM187 635h1v1h-1zM189 631h1v1h-1zM190 628h1v1h-1zM191 625h1v1h-1zM192 622h1v1h-1zM193 620h1v1h-1zM194 617h1v1h-1zM195 615h1v1h-1zM195 612h1v1h-1zM196 610h1v1h-1zM197 608h1v1h-1zM198 606h1v1h-1zM198 605h1v1h-1zM199 603h1v1h-1zM199 601h1v1h-1zM200 600h1v1h-1zM184 716h1v1h-1zM186 708h1v1h-1zM187 701h1v1h-1zM188 694h1v1h-1zM189 687h1v1h-1zM190 681h1v1h-1zM191 675h1v1h-1zM192 669h1v1h-1zM193 664h1v1h-1zM194 659h1v1h-1zM195 654h1v1h-1zM196 649h1v1h-1zM197 645h1v1h-1zM197 641h1v1h-1zM198 637h1v1h-1zM199 634h1v1h-1zM199 631h1v1h-1zM200 627h1v1h-1zM200 624h1v1h-1zM201 622h1v1h-1zM201 619h1v1h-1zM202 617h1v1h-1zM202 614h1v1h-1zM202 612h1v1h-1zM203 610h1v1h-1zM203 608h1v1h-1zM204 606h1v1h-1zM204 604h1v1h-1zM204 603h1v1h-1zM204 601h1v1h-1zM209 718h1v1h-1zM209 710h1v1h-1zM209 703h1v1h-1zM209 695h1v1h-1zM209 689h1v1h-1zM209 682h1v1h-1zM209 676h1v1h-1zM209 670h1v1h-1zM209 665h1v1h-1zM209 660h1v1h-1zM209 655h1v1h-1zM209 651h1v1h-1zM209 646h1v1h-1zM209 642h1v1h-1zM209 638h1v1h-1zM209 635h1v1h-1zM209 631h1v1h-1zM209 628h1v1h-1zM209 625h1v1h-1zM209 622h1v1h-1zM209 620h1v1h-1zM209 617h1v1h-1zM209 615h1v1h-1zM209 613h1v1h-1zM209 610h1v1h-1zM209 608h1v1h-1zM209 607h1v1h-1zM209 605h1v1h-1zM209 603h1v1h-1zM209 601h1v1h-1zM234 716h1v1h-1zM232 708h1v1h-1zM231 701h1v1h-1zM230 694h1v1h-1zM229 687h1v1h-1zM228 681h1v1h-1zM227 675h1v1h-1zM226 669h1v1h-1zM225 664h1v1h-1zM224 659h1v1h-1zM223 654h1v1h-1zM222 649h1v1h-1zM221 645h1v1h-1zM221 641h1v1h-1zM220 637h1v1h-1zM219 634h1v1h-1zM219 631h1v1h-1zM218 627h1v1h-1zM218 624h1v1h-1zM217 622h1v1h-1zM217 619h1v1h-1zM216 617h1v1h-1zM216 614h1v1h-1zM216 612h1v1h-1zM215 610h1v1h-1zM215 608h1v1h-1zM214 606h1v1h-1zM214 604h1v1h-1zM214 603h1v1h-1zM214 601h1v1h-1zM258 710h1v1h-1zM255 702h1v1h-1zM253 695h1v1h-1zM250 688h1v1h-1zM248 682h1v1h-1zM246 676h1v1h-1zM244 670h1v1h-1zM242 665h1v1h-1zM240 660h1v1h-1zM238 655h1v1h-1zM236 650h1v1h-1zM235 646h1v1h-1zM233 642h1v1h-1zM232 638h1v1h-1zM231 635h1v1h-1zM229 631h1v1h-1zM228 628h1v1h-1zM227 625h1v1h-1zM226 622h1v1h-1zM225 620h1v1h-1zM224 617h1v1h-1zM223 615h1v1h-1zM223 612h1v1h-1zM222 610h1v1h-1zM221 608h1v1h-1zM220 606h1v1h-1zM220 605h1v1h-1zM219 603h1v1h-1zM219 601h1v1h-1zM218 600h1v1h-1zM281 699h1v1h-1zM277 692h1v1h-1zM273 686h1v1h-1zM269 679h1v1h-1zM266 673h1v1h-1zM263 668h1v1h-1zM260 663h1v1h-1zM257 658h1v1h-1zM254 653h1v1h-1zM251 649h1v1h-1zM249 644h1v1h-1zM247 640h1v1h-1zM245 637h1v1h-1zM243 633h1v1h-1zM241 630h1v1h-1zM239 627h1v1h-1zM237 624h1v1h-1zM236 621h1v1h-1zM234 619h1v1h-1zM233 616h1v1h-1zM231 614h1v1h-1zM230 612h1v1h-1zM229 609h1v1h-1zM228 608h1v1h-1zM227 606h1v1h-1zM226 604h1v1h-1zM225 602h1v1h-1zM224 601h1v1h-1zM223 599h1v1h-1zM222 598h1v1h-1zM301 685h1v1h-1zM296 679h1v1h-1zM291 673h1v1h-1zM286 667h1v1h-1zM282 662h1v1h-1zM278 657h1v1h-1zM274 652h1v1h-1zM270 648h1v1h-1zM267 644h1v1h-1zM264 640h1v1h-1zM260 636h1v1h-1zM258 633h1v1h-1zM255 630h1v1h-1zM252 627h1v1h-1zM250 624h1v1h-1zM247 621h1v1h-1zM245 618h1v1h-1zM243 616h1v1h-1zM241 613h1v1h-1zM239 611h1v1h-1zM238 609h1v1h-1zM236 607h1v1h-1zM235 605h1v1h-1zM233 604h1v1h-1zM232 602h1v1h-1zM230 601h1v1h-1zM229 599h1v1h-1zM228 598h1v1h-1zM227 596h1v1h-1zM226 595h1v1h-1zM319 667h1v1h-1zM313 662h1v1h-1zM307 657h1v1h-1zM301 652h1v1h-1zM296 648h1v1h-1zM291 644h1v1h-1zM286 640h1v1h-1zM282 636h1v1h-1zM278 633h1v1h-1zM274 630h1v1h-1zM270 626h1v1h-1zM267 624h1v1h-1zM264 621h1v1h-1zM261 618h1v1h-1zM258 616h1v1h-1zM255 613h1v1h-1zM252 611h1v1h-1zM250 609h1v1h-1zM247 607h1v1h-1zM245 605h1v1h-1zM243 604h1v1h-1zM241 602h1v1h-1zM239 601h1v1h-1zM238 599h1v1h-1zM236 598h1v1h-1zM235 596h1v1h-1zM233 595h1v1h-1zM232 594h1v1h-1zM230 593h1v1h-1zM229 592h1v1h-1zM333 647h1v1h-1zM326 643h1v1h-1zM320 639h1v1h-1zM313 635h1v1h-1zM307 632h1v1h-1zM302 629h1v1h-1zM297 626h1v1h-1zM292 623h1v1h-1zM287 620h1v1h-1zM283 617h1v1h-1zM278 615h1v1h-1zM274 613h1v1h-1zM271 611h1v1h-1zM267 609h1v1h-1zM264 607h1v1h-1zM261 605h1v1h-1zM258 603h1v1h-1zM255 602h1v1h-1zM253 600h1v1h-1zM250 599h1v1h-1zM248 597h1v1h-1zM246 596h1v1h-1zM243 595h1v1h-1zM242 594h1v1h-1zM240 593h1v1h-1zM238 592h1v1h-1zM236 591h1v1h-1zM235 590h1v1h-1zM233 589h1v1h-1zM232 588h1v1h-1zM344 624h1v1h-1zM336 621h1v1h-1zM329 619h1v1h-1zM322 616h1v1h-1zM316 614h1v1h-1zM310 612h1v1h-1zM304 610h1v1h-1zM299 608h1v1h-1zM294 606h1v1h-1zM289 604h1v1h-1zM284 602h1v1h-1zM280 601h1v1h-1zM276 599h1v1h-1zM272 598h1v1h-1zM269 597h1v1h-1zM265 595h1v1h-1zM262 594h1v1h-1zM259 593h1v1h-1zM256 592h1v1h-1zM254 591h1v1h-1zM251 590h1v1h-1zM249 589h1v1h-1zM246 589h1v1h-1zM244 588h1v1h-1zM242 587h1v1h-1zM240 586h1v1h-1zM239 586h1v1h-1zM237 585h1v1h-1zM235 585h1v1h-1zM234 584h1v1h-1zM350 600h1v1h-1zM342 598h1v1h-1zM335 597h1v1h-1zM328 596h1v1h-1zM321 595h1v1h-1zM315 594h1v1h-1zM309 593h1v1h-1zM303 592h1v1h-1zM298 591h1v1h-1zM293 590h1v1h-1zM288 589h1v1h-1zM283 588h1v1h-1zM279 587h1v1h-1zM275 587h1v1h-1zM271 586h1v1h-1zM268 585h1v1h-1zM265 585h1v1h-1zM261 584h1v1h-1zM258 584h1v1h-1zM256 583h1v1h-1zM253 583h1v1h-1zM251 582h1v1h-1zM248 582h1v1h-1zM246 582h1v1h-1zM244 581h1v1h-1zM242 581h1v1h-1zM240 580h1v1h-1zM238 580h1v1h-1zM237 580h1v1h-1zM235 580h1v1h-1z" fill="#808080"/><path d="M294 575h1v1h-1zM294 571h1v1h-1zM293 567h1v1h-1zM293 563h1v1h-1zM292 559h1v1h-1zM291 555h1v1h-1zM290 551h1v1h-1zM289 547h1v1h-1zM288 543h1v1h-1zM286 539h1v1h-1zM284 536h1v1h-1zM282 532h1v1h-1zM280 529h1v1h-1zM278 525h1v1h-1zM275 522h1v1h-1zM273 519h1v1h-1zM270 516h1v1h-1zM267 513h1v1h-1zM264 510h1v1h-1zM261 508h1v1h-1zM258 505h1v1h-1zM254 503h1v1h-1zM251 501h1v1h-1zM247 499h1v1h-1zM244 497h1v1h-1zM240 496h1v1h-1zM236 495h1v1h-1zM232 493h1v1h-1zM228 492h1v1h-1zM224 491h1v1h-1zM220 491h1v1h-1zM216 490h1v1h-1zM212 490h1v1h-1zM208 490h1v1h-1zM204 490h1v1h-1zM200 491h1v1h-1zM196 491h1v1h-1zM192 492h1v1h-1zM188 493h1v1h-1zM184 494h1v1h-1zM180 495h1v1h-1zM176 497h1v1h-1zM172 498h1v1h-1zM169 500h1v1h-1zM165 502h1v1h-1zM162 504h1v1h-1zM159 507h1v1h-1zM155 509h1v1h-1zM152 512h1v1h-1zM149 515h1v1h-1zM146 518h1v1h-1zM144 521h1v1h-1zM141 524h1v1h-1zM139 527h1v1h-1zM137 531h1v1h-1zM135 534h1v1h-1zM133 538h1v1h-1zM131 541h1v1h-1zM129 545h1v1h-1zM128 549h1v1h-1zM127 553h1v1h-1zM126 557h1v1h-1zM125 561h1v1h-1zM125 565h1v1h-1zM124 569h1v1h-1zM124 573h1v1h-1zM124 577h1v1h-1zM124 581h1v1h-1zM125 585h1v1h-1zM125 589h1v1h-1zM126 593h1v1h-1zM127 597h1v1h-1zM128 601h1v1h-1zM130 605h1v1h-1zM131 609h1v1h-1zM133 613h1v1h-1zM135 616h1v1h-1zM137 620h1v1h-1zM139 623h1v1h-1zM141 626h1v1h-1zM144 630h1v1h-1zM147 633h1v1h-1zM150 636h1v1h-1zM152 638h1v1h-1zM156 641h1v1h-1zM159 643h1v1h-1zM162 646h1v1h-1zM166 648h1v1h-1zM169 650h1v1h-1zM173 652h1v1h-1zM177 653h1v1h-1zM180 655h1v1h-1zM184 656h1v1h-1zM188 657h1v1h-1zM192 658h1v1h-1zM196 659h1v1h-1zM200 659h1v1h-1zM204 660h1v1h-1zM208 660h1v1h-1zM212 660h1v1h-1zM216 660h1v1h-1zM220 659h1v1h-1zM224 658h1v1h-1zM228 658h1v1h-1zM232 657h1v1h-1zM236 655h1v1h-1zM240 654h1v1h-1zM244 652h1v1h-1zM248 651h1v1h-1zM251 649h1v1h-1zM255 647h1v1h-1zM258 644h1v1h-1zM261 642h1v1h-1zM264 639h1v1h-1zM267 637h1v1h-1zM270 634h1v1h-1zM273 631h1v1h-1zM276 628h1v1h-1zM278 624h1v1h-1zM280 621h1v1h-1zM283 617h1v1h-1zM284 614h1v1h-1zM286 610h1v1h-1zM288 606h1v1h-1zM289 603h1v1h-1zM290 599h1v1h-1zM292 595h1v1h-1zM292 591h1v1h-1zM293 587h1v1h-1zM294 583h1v1h-1zM256 575h1v1h-1zM256 573h1v1h-1zM256 571h1v1h-1zM256 569h1v1h-1zM256 567h1v1h-1zM255 565h1v1h-1zM255 563h1v1h-1zM254 561h1v1h-1zM254 559h1v1h-1zM253 558h1v1h-1zM252 556h1v1h-1zM251 554h1v1h-1zM251 552h1v1h-1zM250 550h1v1h-1zM248 549h1v1h-1zM247 547h1v1h-1zM246 546h1v1h-1zM245 544h1v1h-1zM244 543h1v1h-1zM242 541h1v1h-1zM241 540h1v1h-1zM239 538h1v1h-1zM238 537h1v1h-1zM236 536h1v1h-1zM234 535h1v1h-1zM233 534h1v1h-1zM231 533h1v1h-1zM229 532h1v1h-1zM227 531h1v1h-1zM226 531h1v1h-1zM224 530h1v1h-1zM222 529h1v1h-1zM220 529h1v1h-1zM218 528h1v1h-1zM216 528h1v1h-1zM214 528h1v1h-1zM212 528h1v1h-1zM210 528h1v1h-1zM208 528h1v1h-1zM206 528h1v1h-1zM204 528h1v1h-1zM202 528h1v1h-1zM200 528h1v1h-1zM198 529h1v1h-1zM196 529h1v1h-1zM194 530h1v1h-1zM192 531h1v1h-1zM191 531h1v1h-1zM189 532h1v1h-1zM187 533h1v1h-1zM185 534h1v1h-1zM184 535h1v1h-1zM182 536h1v1h-1zM180 537h1v1h-1zM179 538h1v1h-1zM177 540h1v1h-1zM176 541h1v1h-1zM174 543h1v1h-1zM173 544h1v1h-1zM172 546h1v1h-1zM171 547h1v1h-1zM170 549h1v1h-1zM168 550h1v1h-1zM167 552h1v1h-1zM167 554h1v1h-1zM166 556h1v1h-1zM165 558h1v1h-1zM164 559h1v1h-1zM164 561h1v1h-1zM163 563h1v1h-1zM163 565h1v1h-1zM162 567h1v1h-1zM162 569h1v1h-1zM162 571h1v1h-1zM162 573h1v1h-1zM162 575h1v1h-1zM162 577h1v1h-1zM162 579h1v1h-1zM162 581h1v1h-1zM162 583h1v1h-1zM163 585h1v1h-1zM163 587h1v1h-1zM164 589h1v1h-1zM164 591h1v1h-1zM165 592h1v1h-1zM166 594h1v1h-1zM167 596h1v1h-1zM167 598h1v1h-1zM168 600h1v1h-1zM170 601h1v1h-1zM171 603h1v1h-1zM172 604h1v1h-1zM173 606h1v1h-1zM174 607h1v1h-1zM176 609h1v1h-1zM177 610h1v1h-1zM179 612h1v1h-1zM180 613h1v1h-1zM182 614h1v1h-1zM184 615h1v1h-1zM185 616h1v1h-1zM187 617h1v1h-1zM189 618h1v1h-1zM191 619h1v1h-1zM192 619h1v1h-1zM194 620h1v1h-1zM196 621h1v1h-1zM198 621h1v1h-1zM200 622h1v1h-1zM202 622h1v1h-1zM204 622h1v1h-1zM206 622h1v1h-1zM208 622h1v1h-1zM210 622h1v1h-1zM212 622h1v1h-1zM214 622h1v1h-1zM216 622h1v1h-1zM218 622h1v1h-1zM220 621h1v1h-1zM222 621h1v1h-1zM224 620h1v1h-1zM226 619h1v1h-1zM227 619h1v1h-1zM229 618h1v1h-1zM231 617h1v1h-1zM233 616h1v1h-1zM234 615h1v1h-1zM236 614h1v1h-1zM238 613h1v1h-1zM239 612h1v1h-1zM241 610h1v1h-1zM242 609h1v1h-1zM244 607h1v1h-1zM245 606h1v1h-1zM246 604h1v1h-1zM247 603h1v1h-1zM248 601h1v1h-1zM250 600h1v1h-1zM251 598h1v1h-1zM251 596h1v1h-1zM252 594h1v1h-1zM253 592h1v1h-1zM254 591h1v1h-1zM254 589h1v1h-1zM255 587h1v1h-1zM255 585h1v1h-1zM256 583h1v1h-1zM256 581h1v1h-1zM256 579h1v1h-1zM256 577h1v1h-1z" fill="#808080"/><circle cx="209.5" cy="575.5" r="26.5" fill="none" stroke="#909090" stroke-width="1"/><circle cx="209.5" cy="575.5" r="14.8" fill="none" stroke="#909090" stroke-width="1"/><circle cx="209.5" cy="575.5" r="8.3" fill="none" stroke="#909090" stroke-width="1"/><path d="M209.5 423.5L194.5 425.7L180.1 432.6L171.9 439.4L161.0 452.4L154.2 466.1L150.1 485.2L150.8 503.0L154.2 519.4L159.5 530.7L171.9 548.9L178.8 556.8L179.0 560.7L175.1 564.6L176.4 568.5L184.2 573.7L192.1 575.4L199.2 575.5L192.1 576.5L185.5 578.2L182.3 580.2L181.0 584.1L182.9 587.3L186.5 590.6L186.8 598.4L188.8 600.0L194.0 599.7L198.6 597.1L201.8 593.9L202.2 601.0L203.1 607.5L205.1 611.4L209.5 613.8L213.9 611.4L215.9 607.5L216.8 601.0L217.2 593.9L220.4 597.1L225.0 599.7L230.2 600.0L232.2 598.4L232.5 590.6L236.1 587.3L238.0 584.1L236.7 580.2L233.5 578.2L226.9 576.5L219.8 575.5L226.9 575.4L234.8 573.7L242.6 568.5L243.9 564.6L240.0 560.7L240.2 556.8L247.1 548.9L259.5 530.7L264.8 519.4L268.2 503.0L268.9 485.2L264.8 466.1L258.0 452.4L247.1 439.4L238.9 432.6L224.5 425.7L209.5 423.5" fill="none" stroke="#000" stroke-width="1" stroke-linejoin="round"/><text x="207.0" y="434" font-size="12.6" textLength="5.6" lengthAdjust="spacingAndGlyphs" font-family="Liberation Sans, sans-serif" fill="#000">0</text><text x="202.7" y="501" font-size="12.6" textLength="14.2" lengthAdjust="spacingAndGlyphs" font-family="Liberation Sans, sans-serif" fill="#000">-10</text><text x="202.7" y="538" font-size="12.6" textLength="14.2" lengthAdjust="spacingAndGlyphs" font-family="Liberation Sans, sans-serif" fill="#000">-20</text><text x="202.7" y="560" font-size="12.6" textLength="14.2" lengthAdjust="spacingAndGlyphs" font-family="Liberation Sans, sans-serif" fill="#000">-30</text><text x="202.7" y="571" font-size="12.6" textLength="14.2" lengthAdjust="spacingAndGlyphs" font-family="Liberation Sans, sans-serif" fill="#000">-40</text></svg>
<svg style="left:477px;top:422px" width="307" height="155" viewBox="477 422 307 155" shape-rendering="crispEdges"><path d="M478.5 576A152 152 0 0 1 782.5 576z" fill="#fff" stroke="none"/><path d="M478.5 576A152 152 0 0 1 782.5 576" fill="none" stroke="#C0C0C0" stroke-width="1"/><rect x="478" y="575" width="305" height="1" fill="#C0C0C0"/><path d="M773 575h1v1h-1zM765 575h1v1h-1zM758 575h1v1h-1zM750 575h1v1h-1zM744 575h1v1h-1zM737 575h1v1h-1zM731 575h1v1h-1zM725 575h1v1h-1zM720 575h1v1h-1zM715 575h1v1h-1zM710 575h1v1h-1zM706 575h1v1h-1zM701 575h1v1h-1zM697 575h1v1h-1zM693 575h1v1h-1zM690 575h1v1h-1zM686 575h1v1h-1zM683 575h1v1h-1zM680 575h1v1h-1zM677 575h1v1h-1zM675 575h1v1h-1zM672 575h1v1h-1zM670 575h1v1h-1zM668 575h1v1h-1zM665 575h1v1h-1zM663 575h1v1h-1zM662 575h1v1h-1zM660 575h1v1h-1zM658 575h1v1h-1zM656 575h1v1h-1zM771 550h1v1h-1zM763 552h1v1h-1zM756 553h1v1h-1zM749 554h1v1h-1zM742 555h1v1h-1zM736 556h1v1h-1zM730 557h1v1h-1zM724 558h1v1h-1zM719 559h1v1h-1zM714 560h1v1h-1zM709 561h1v1h-1zM704 562h1v1h-1zM700 563h1v1h-1zM696 563h1v1h-1zM692 564h1v1h-1zM689 565h1v1h-1zM686 565h1v1h-1zM682 566h1v1h-1zM679 566h1v1h-1zM677 567h1v1h-1zM674 567h1v1h-1zM672 568h1v1h-1zM669 568h1v1h-1zM667 568h1v1h-1zM665 569h1v1h-1zM663 569h1v1h-1zM661 570h1v1h-1zM659 570h1v1h-1zM658 570h1v1h-1zM656 570h1v1h-1zM765 526h1v1h-1zM757 529h1v1h-1zM750 531h1v1h-1zM743 534h1v1h-1zM737 536h1v1h-1zM731 538h1v1h-1zM725 540h1v1h-1zM720 542h1v1h-1zM715 544h1v1h-1zM710 546h1v1h-1zM705 548h1v1h-1zM701 549h1v1h-1zM697 551h1v1h-1zM693 552h1v1h-1zM690 553h1v1h-1zM686 555h1v1h-1zM683 556h1v1h-1zM680 557h1v1h-1zM677 558h1v1h-1zM675 559h1v1h-1zM672 560h1v1h-1zM670 561h1v1h-1zM667 561h1v1h-1zM665 562h1v1h-1zM663 563h1v1h-1zM661 564h1v1h-1zM660 564h1v1h-1zM658 565h1v1h-1zM656 565h1v1h-1zM655 566h1v1h-1zM754 503h1v1h-1zM747 507h1v1h-1zM741 511h1v1h-1zM734 515h1v1h-1zM728 518h1v1h-1zM723 521h1v1h-1zM718 524h1v1h-1zM713 527h1v1h-1zM708 530h1v1h-1zM704 533h1v1h-1zM699 535h1v1h-1zM695 537h1v1h-1zM692 539h1v1h-1zM688 541h1v1h-1zM685 543h1v1h-1zM682 545h1v1h-1zM679 547h1v1h-1zM676 548h1v1h-1zM674 550h1v1h-1zM671 551h1v1h-1zM669 553h1v1h-1zM667 554h1v1h-1zM664 555h1v1h-1zM663 556h1v1h-1zM661 557h1v1h-1zM659 558h1v1h-1zM657 559h1v1h-1zM656 560h1v1h-1zM654 561h1v1h-1zM653 562h1v1h-1zM740 483h1v1h-1zM734 488h1v1h-1zM728 493h1v1h-1zM722 498h1v1h-1zM717 502h1v1h-1zM712 506h1v1h-1zM707 510h1v1h-1zM703 514h1v1h-1zM699 517h1v1h-1zM695 520h1v1h-1zM691 524h1v1h-1zM688 526h1v1h-1zM685 529h1v1h-1zM682 532h1v1h-1zM679 534h1v1h-1zM676 537h1v1h-1zM673 539h1v1h-1zM671 541h1v1h-1zM668 543h1v1h-1zM666 545h1v1h-1zM664 546h1v1h-1zM662 548h1v1h-1zM660 549h1v1h-1zM659 551h1v1h-1zM657 552h1v1h-1zM656 554h1v1h-1zM654 555h1v1h-1zM653 556h1v1h-1zM651 557h1v1h-1zM650 558h1v1h-1zM722 465h1v1h-1zM717 471h1v1h-1zM712 477h1v1h-1zM707 483h1v1h-1zM703 488h1v1h-1zM699 493h1v1h-1zM695 498h1v1h-1zM691 502h1v1h-1zM688 506h1v1h-1zM685 510h1v1h-1zM681 514h1v1h-1zM679 517h1v1h-1zM676 520h1v1h-1zM673 523h1v1h-1zM671 526h1v1h-1zM668 529h1v1h-1zM666 532h1v1h-1zM664 534h1v1h-1zM662 537h1v1h-1zM660 539h1v1h-1zM659 541h1v1h-1zM657 543h1v1h-1zM656 545h1v1h-1zM654 546h1v1h-1zM653 548h1v1h-1zM651 549h1v1h-1zM650 551h1v1h-1zM649 552h1v1h-1zM648 554h1v1h-1zM647 555h1v1h-1zM702 451h1v1h-1zM698 458h1v1h-1zM694 464h1v1h-1zM690 471h1v1h-1zM687 477h1v1h-1zM684 482h1v1h-1zM681 487h1v1h-1zM678 492h1v1h-1zM675 497h1v1h-1zM672 501h1v1h-1zM670 506h1v1h-1zM668 510h1v1h-1zM666 513h1v1h-1zM664 517h1v1h-1zM662 520h1v1h-1zM660 523h1v1h-1zM658 526h1v1h-1zM657 529h1v1h-1zM655 531h1v1h-1zM654 534h1v1h-1zM652 536h1v1h-1zM651 538h1v1h-1zM650 541h1v1h-1zM649 542h1v1h-1zM648 544h1v1h-1zM647 546h1v1h-1zM646 548h1v1h-1zM645 549h1v1h-1zM644 551h1v1h-1zM643 552h1v1h-1zM679 440h1v1h-1zM676 448h1v1h-1zM674 455h1v1h-1zM671 462h1v1h-1zM669 468h1v1h-1zM667 474h1v1h-1zM665 480h1v1h-1zM663 485h1v1h-1zM661 490h1v1h-1zM659 495h1v1h-1zM657 500h1v1h-1zM656 504h1v1h-1zM654 508h1v1h-1zM653 512h1v1h-1zM652 515h1v1h-1zM650 519h1v1h-1zM649 522h1v1h-1zM648 525h1v1h-1zM647 528h1v1h-1zM646 530h1v1h-1zM645 533h1v1h-1zM644 535h1v1h-1zM644 538h1v1h-1zM643 540h1v1h-1zM642 542h1v1h-1zM641 544h1v1h-1zM641 545h1v1h-1zM640 547h1v1h-1zM640 549h1v1h-1zM639 550h1v1h-1zM655 434h1v1h-1zM653 442h1v1h-1zM652 449h1v1h-1zM651 456h1v1h-1zM650 463h1v1h-1zM649 469h1v1h-1zM648 475h1v1h-1zM647 481h1v1h-1zM646 486h1v1h-1zM645 491h1v1h-1zM644 496h1v1h-1zM643 501h1v1h-1zM642 505h1v1h-1zM642 509h1v1h-1zM641 513h1v1h-1zM640 516h1v1h-1zM640 519h1v1h-1zM639 523h1v1h-1zM639 526h1v1h-1zM638 528h1v1h-1zM638 531h1v1h-1zM637 533h1v1h-1zM637 536h1v1h-1zM637 538h1v1h-1zM636 540h1v1h-1zM636 542h1v1h-1zM635 544h1v1h-1zM635 546h1v1h-1zM635 547h1v1h-1zM635 549h1v1h-1zM630 432h1v1h-1zM630 440h1v1h-1zM630 447h1v1h-1zM630 455h1v1h-1zM630 461h1v1h-1zM630 468h1v1h-1zM630 474h1v1h-1zM630 480h1v1h-1zM630 485h1v1h-1zM630 490h1v1h-1zM630 495h1v1h-1zM630 499h1v1h-1zM630 504h1v1h-1zM630 508h1v1h-1zM630 512h1v1h-1zM630 515h1v1h-1zM630 519h1v1h-1zM630 522h1v1h-1zM630 525h1v1h-1zM630 528h1v1h-1zM630 530h1v1h-1zM630 533h1v1h-1zM630 535h1v1h-1zM630 537h1v1h-1zM630 540h1v1h-1zM630 542h1v1h-1zM630 543h1v1h-1zM630 545h1v1h-1zM630 547h1v1h-1zM630 549h1v1h-1zM605 434h1v1h-1zM607 442h1v1h-1zM608 449h1v1h-1zM609 456h1v1h-1zM610 463h1v1h-1zM611 469h1v1h-1zM612 475h1v1h-1zM613 481h1v1h-1zM614 486h1v1h-1zM615 491h1v1h-1zM616 496h1v1h-1zM617 501h1v1h-1zM618 505h1v1h-1zM618 509h1v1h-1zM619 513h1v1h-1zM620 516h1v1h-1zM620 519h1v1h-1zM621 523h1v1h-1zM621 526h1v1h-1zM622 528h1v1h-1zM622 531h1v1h-1zM623 533h1v1h-1zM623 536h1v1h-1zM623 538h1v1h-1zM624 540h1v1h-1zM624 542h1v1h-1zM625 544h1v1h-1zM625 546h1v1h-1zM625 547h1v1h-1zM625 549h1v1h-1zM581 440h1v1h-1zM584 448h1v1h-1zM586 455h1v1h-1zM589 462h1v1h-1zM591 468h1v1h-1zM593 474h1v1h-1zM595 480h1v1h-1zM597 485h1v1h-1zM599 490h1v1h-1zM601 495h1v1h-1zM603 500h1v1h-1zM604 504h1v1h-1zM606 508h1v1h-1zM607 512h1v1h-1zM608 515h1v1h-1zM610 519h1v1h-1zM611 522h1v1h-1zM612 525h1v1h-1zM613 528h1v1h-1zM614 530h1v1h-1zM615 533h1v1h-1zM616 535h1v1h-1zM616 538h1v1h-1zM617 540h1v1h-1zM618 542h1v1h-1zM619 544h1v1h-1zM619 545h1v1h-1zM620 547h1v1h-1zM620 549h1v1h-1zM621 550h1v1h-1zM558 451h1v1h-1zM562 458h1v1h-1zM566 464h1v1h-1zM570 471h1v1h-1zM573 477h1v1h-1zM576 482h1v1h-1zM579 487h1v1h-1zM582 492h1v1h-1zM585 497h1v1h-1zM588 501h1v1h-1zM590 506h1v1h-1zM592 510h1v1h-1zM594 513h1v1h-1zM596 517h1v1h-1zM598 520h1v1h-1zM600 523h1v1h-1zM602 526h1v1h-1zM603 529h1v1h-1zM605 531h1v1h-1zM606 534h1v1h-1zM608 536h1v1h-1zM609 538h1v1h-1zM610 541h1v1h-1zM611 542h1v1h-1zM612 544h1v1h-1zM613 546h1v1h-1zM614 548h1v1h-1zM615 549h1v1h-1zM616 551h1v1h-1zM617 552h1v1h-1zM538 465h1v1h-1zM543 471h1v1h-1zM548 477h1v1h-1zM553 483h1v1h-1zM557 488h1v1h-1zM561 493h1v1h-1zM565 498h1v1h-1zM569 502h1v1h-1zM572 506h1v1h-1zM575 510h1v1h-1zM579 514h1v1h-1zM581 517h1v1h-1zM584 520h1v1h-1zM587 523h1v1h-1zM589 526h1v1h-1zM592 529h1v1h-1zM594 532h1v1h-1zM596 534h1v1h-1zM598 537h1v1h-1zM600 539h1v1h-1zM601 541h1v1h-1zM603 543h1v1h-1zM604 545h1v1h-1zM606 546h1v1h-1zM607 548h1v1h-1zM609 549h1v1h-1zM610 551h1v1h-1zM611 552h1v1h-1zM612 554h1v1h-1zM613 555h1v1h-1zM520 483h1v1h-1zM526 488h1v1h-1zM532 493h1v1h-1zM538 498h1v1h-1zM543 502h1v1h-1zM548 506h1v1h-1zM553 510h1v1h-1zM557 514h1v1h-1zM561 517h1v1h-1zM565 520h1v1h-1zM569 524h1v1h-1zM572 526h1v1h-1zM575 529h1v1h-1zM578 532h1v1h-1zM581 534h1v1h-1zM584 537h1v1h-1zM587 539h1v1h-1zM589 541h1v1h-1zM592 543h1v1h-1zM594 545h1v1h-1zM596 546h1v1h-1zM598 548h1v1h-1zM600 549h1v1h-1zM601 551h1v1h-1zM603 552h1v1h-1zM604 554h1v1h-1zM606 555h1v1h-1zM607 556h1v1h-1zM609 557h1v1h-1zM610 558h1v1h-1zM506 503h1v1h-1zM513 507h1v1h-1zM519 511h1v1h-1zM526 515h1v1h-1zM532 518h1v1h-1zM537 521h1v1h-1zM542 524h1v1h-1zM547 527h1v1h-1zM552 530h1v1h-1zM556 533h1v1h-1zM561 535h1v1h-1zM565 537h1v1h-1zM568 539h1v1h-1zM572 541h1v1h-1zM575 543h1v1h-1zM578 545h1v1h-1zM581 547h1v1h-1zM584 548h1v1h-1zM586 550h1v1h-1zM589 551h1v1h-1zM591 553h1v1h-1zM593 554h1v1h-1zM596 555h1v1h-1zM597 556h1v1h-1zM599 557h1v1h-1zM601 558h1v1h-1zM603 559h1v1h-1zM604 560h1v1h-1zM606 561h1v1h-1zM607 562h1v1h-1zM495 526h1v1h-1zM503 529h1v1h-1zM510 531h1v1h-1zM517 534h1v1h-1zM523 536h1v1h-1zM529 538h1v1h-1zM535 540h1v1h-1zM540 542h1v1h-1zM545 544h1v1h-1zM550 546h1v1h-1zM555 548h1v1h-1zM559 549h1v1h-1zM563 551h1v1h-1zM567 552h1v1h-1zM570 553h1v1h-1zM574 555h1v1h-1zM577 556h1v1h-1zM580 557h1v1h-1zM583 558h1v1h-1zM585 559h1v1h-1zM588 560h1v1h-1zM590 561h1v1h-1zM593 561h1v1h-1zM595 562h1v1h-1zM597 563h1v1h-1zM599 564h1v1h-1zM600 564h1v1h-1zM602 565h1v1h-1zM604 565h1v1h-1zM605 566h1v1h-1zM489 550h1v1h-1zM497 552h1v1h-1zM504 553h1v1h-1zM511 554h1v1h-1zM518 555h1v1h-1zM524 556h1v1h-1zM530 557h1v1h-1zM536 558h1v1h-1zM541 559h1v1h-1zM546 560h1v1h-1zM551 561h1v1h-1zM556 562h1v1h-1zM560 563h1v1h-1zM564 563h1v1h-1zM568 564h1v1h-1zM571 565h1v1h-1zM574 565h1v1h-1zM578 566h1v1h-1zM581 566h1v1h-1zM583 567h1v1h-1zM586 567h1v1h-1zM588 568h1v1h-1zM591 568h1v1h-1zM593 568h1v1h-1zM595 569h1v1h-1zM597 569h1v1h-1zM599 570h1v1h-1zM601 570h1v1h-1zM602 570h1v1h-1zM604 570h1v1h-1zM487 575h1v1h-1zM495 575h1v1h-1zM502 575h1v1h-1zM510 575h1v1h-1zM516 575h1v1h-1zM523 575h1v1h-1zM529 575h1v1h-1zM535 575h1v1h-1zM540 575h1v1h-1zM545 575h1v1h-1zM550 575h1v1h-1zM554 575h1v1h-1zM559 575h1v1h-1zM563 575h1v1h-1zM567 575h1v1h-1zM570 575h1v1h-1zM574 575h1v1h-1zM577 575h1v1h-1zM580 575h1v1h-1zM583 575h1v1h-1zM585 575h1v1h-1zM588 575h1v1h-1zM590 575h1v1h-1zM592 575h1v1h-1zM595 575h1v1h-1zM597 575h1v1h-1zM598 575h1v1h-1zM600 575h1v1h-1zM602 575h1v1h-1zM604 575h1v1h-1z" fill="#808080"/><path d="M715 575h1v1h-1zM715 571h1v1h-1zM714 567h1v1h-1zM714 563h1v1h-1zM713 559h1v1h-1zM712 555h1v1h-1zM711 551h1v1h-1zM710 547h1v1h-1zM709 543h1v1h-1zM707 539h1v1h-1zM705 536h1v1h-1zM703 532h1v1h-1zM701 529h1v1h-1zM699 525h1v1h-1zM696 522h1v1h-1zM694 519h1v1h-1zM691 516h1v1h-1zM688 513h1v1h-1zM685 510h1v1h-1zM682 508h1v1h-1zM679 505h1v1h-1zM675 503h1v1h-1zM672 501h1v1h-1zM668 499h1v1h-1zM665 497h1v1h-1zM661 496h1v1h-1zM657 495h1v1h-1zM653 493h1v1h-1zM649 492h1v1h-1zM645 491h1v1h-1zM641 491h1v1h-1zM637 490h1v1h-1zM633 490h1v1h-1zM629 490h1v1h-1zM625 490h1v1h-1zM621 491h1v1h-1zM617 491h1v1h-1zM613 492h1v1h-1zM609 493h1v1h-1zM605 494h1v1h-1zM601 495h1v1h-1zM597 497h1v1h-1zM593 498h1v1h-1zM590 500h1v1h-1zM586 502h1v1h-1zM583 504h1v1h-1zM580 507h1v1h-1zM576 509h1v1h-1zM573 512h1v1h-1zM570 515h1v1h-1zM567 518h1v1h-1zM565 521h1v1h-1zM562 524h1v1h-1zM560 527h1v1h-1zM558 531h1v1h-1zM556 534h1v1h-1zM554 538h1v1h-1zM552 541h1v1h-1zM550 545h1v1h-1zM549 549h1v1h-1zM548 553h1v1h-1zM547 557h1v1h-1zM546 561h1v1h-1zM546 565h1v1h-1zM545 569h1v1h-1zM545 573h1v1h-1zM677 575h1v1h-1zM677 573h1v1h-1zM677 571h1v1h-1zM677 569h1v1h-1zM677 567h1v1h-1zM676 565h1v1h-1zM676 563h1v1h-1zM675 561h1v1h-1zM675 559h1v1h-1zM674 558h1v1h-1zM673 556h1v1h-1zM672 554h1v1h-1zM672 552h1v1h-1zM671 550h1v1h-1zM669 549h1v1h-1zM668 547h1v1h-1zM667 546h1v1h-1zM666 544h1v1h-1zM665 543h1v1h-1zM663 541h1v1h-1zM662 540h1v1h-1zM660 538h1v1h-1zM659 537h1v1h-1zM657 536h1v1h-1zM655 535h1v1h-1zM654 534h1v1h-1zM652 533h1v1h-1zM650 532h1v1h-1zM648 531h1v1h-1zM647 531h1v1h-1zM645 530h1v1h-1zM643 529h1v1h-1zM641 529h1v1h-1zM639 528h1v1h-1zM637 528h1v1h-1zM635 528h1v1h-1zM633 528h1v1h-1zM631 528h1v1h-1zM629 528h1v1h-1zM627 528h1v1h-1zM625 528h1v1h-1zM623 528h1v1h-1zM621 528h1v1h-1zM619 529h1v1h-1zM617 529h1v1h-1zM615 530h1v1h-1zM613 531h1v1h-1zM612 531h1v1h-1zM610 532h1v1h-1zM608 533h1v1h-1zM606 534h1v1h-1zM605 535h1v1h-1zM603 536h1v1h-1zM601 537h1v1h-1zM600 538h1v1h-1zM598 540h1v1h-1zM597 541h1v1h-1zM595 543h1v1h-1zM594 544h1v1h-1zM593 546h1v1h-1zM592 547h1v1h-1zM591 549h1v1h-1zM589 550h1v1h-1zM588 552h1v1h-1zM588 554h1v1h-1zM587 556h1v1h-1zM586 558h1v1h-1zM585 559h1v1h-1zM585 561h1v1h-1zM584 563h1v1h-1zM584 565h1v1h-1zM583 567h1v1h-1zM583 569h1v1h-1zM583 571h1v1h-1zM583 573h1v1h-1zM583 575h1v1h-1z" fill="#808080"/><path d="M604.0 576A26.5 26.5 0 0 1 657.0 576" fill="none" stroke="#909090" stroke-width="1"/><path d="M615.7 576A14.8 14.8 0 0 1 645.3 576" fill="none" stroke="#909090" stroke-width="1"/><path d="M622.2 576A8.3 8.3 0 0 1 638.8 576" fill="none" stroke="#909090" stroke-width="1"/><path d="M782.5 575.5L780.9 559.9L775.9 545.0L766.0 530.0L752.7 519.4L736.1 512.8L719.5 510.1L706.2 510.1L689.9 514.6L678.5 518.2L666.8 525.4L653.9 532.6L652.5 528.6L651.2 520.8L647.9 513.7L642.7 508.5L636.9 506.8L630.4 507.6L625.2 512.4L620.0 517.6L616.7 524.7L614.8 535.2L613.4 544.3L611.5 547.1L606.9 548.6L604.3 552.1L605.0 558.6L607.6 563.8L611.5 567.4L605.0 567.7L598.5 569.3L594.6 571.6L592.6 575.5" fill="none" stroke="#000" stroke-width="1" stroke-linejoin="round"/><text x="628.0" y="434" font-size="12.6" textLength="5.6" lengthAdjust="spacingAndGlyphs" font-family="Liberation Sans, sans-serif" fill="#000">0</text><text x="623.7" y="501" font-size="12.6" textLength="14.2" lengthAdjust="spacingAndGlyphs" font-family="Liberation Sans, sans-serif" fill="#000">-10</text><text x="623.7" y="538" font-size="12.6" textLength="14.2" lengthAdjust="spacingAndGlyphs" font-family="Liberation Sans, sans-serif" fill="#000">-20</text><text x="623.7" y="560" font-size="12.6" textLength="14.2" lengthAdjust="spacingAndGlyphs" font-family="Liberation Sans, sans-serif" fill="#000">-30</text><text x="623.7" y="571" font-size="12.6" textLength="14.2" lengthAdjust="spacingAndGlyphs" font-family="Liberation Sans, sans-serif" fill="#000">-40</text></svg>
<div class="t" style="left:477.5px;top:580px;letter-spacing:-0.22px">11.44(dBi) = 0dB</div>
<div style="left:864px;top:624px;width:151px;height:38px;background:#000"><div class="btn" style="left:1px;top:1px;width:149px;height:36px"><div class="t" style="top:6px;letter-spacing:1px;left:-1px">Да</div></div></div>
<div class="btn" style="left:862px;top:683px;width:151px;height:38px"><div class="t" style="top:7px;letter-spacing:0.9px;left:-1px">Отказ</div></div>
<div id="tb" style="left:0;top:738px;width:1024px;height:30px;background:linear-gradient(to bottom,#1f2f86 0,#3165c4 3%,#3682e5 6%,#4490e6 10%,#3883e5 12%,#2b71e0 15%,#2663da 18%,#235bd6 20%,#2258d5 23%,#2157d6 38%,#245ddb 54%,#2562df 86%,#245fdc 89%,#2158d4 92%,#1d4ec0 95%,#1941a5 98%)">
<div style="left:0;top:0;width:96px;height:30px;border-radius:0 8px 8px 0/0 15px 15px 0;background:linear-gradient(to bottom,#2F7A36 0%,#55AE55 7%,#4CA84C 14%,#3F9F3F 28%,#3A9A3A 55%,#3C9E3C 80%,#348C34 92%,#2A7030 100%);box-shadow:inset 2px 0 2px #2C7A38,inset -3px 0 4px #2E7A34">
<svg style="left:10px;top:5px" width="21" height="20" viewBox="0 0 18.5 17.5"><path d="M2.2 1.8C4.5 0.2 6.6 0.6 8.8 1.9L7.4 8.2C5.4 7 3.2 6.8 0.8 8.2z" fill="#E8561C"/><path d="M10 2.6C12.4 3.8 14.6 3.6 17.4 1.8L16 8.2C13.6 9.8 11.2 9.8 8.6 8.8z" fill="#72B82E"/><path d="M0.6 9.6C2.8 8.2 5 8.4 7.2 9.6L5.8 16C3.8 14.8 1.6 14.8 -0.8 16z" fill="#3F7CEA" transform="translate(0.8,0)"/><path d="M8.4 10.2C10.8 11.4 13.2 11.2 15.8 9.6L14.4 16C11.8 17.6 9.4 17.6 7 16.4z" fill="#F6C21A"/></svg>
<div style="left:34px;top:3px;font:italic bold 18px/24px 'Liberation Sans',sans-serif;color:#fff;letter-spacing:-0.9px;text-shadow:1px 2px 2px #1F5F24;white-space:nowrap">пуск</div>
</div>
<svg style="left:108px;top:7px" width="16" height="16" viewBox="0 0 16 16"><rect width="16" height="16" fill="#0F5A7E"/><path d="M3 5l9-3 2 9-9 3z" fill="#E8F0E8"/><path d="M4 6l8-2.6M4.6 8.4l8-2.6M5.2 10.8l8-2.6" stroke="#2E8B57" stroke-width="1.2"/><rect x="2" y="9" width="9" height="6" fill="#F4F4F4" stroke="#8A9AA0" stroke-width=".6"/><path d="M3 11h7M3 13h7M5 9v6M8 9v6" stroke="#70808A" stroke-width=".7"/></svg>
<svg style="left:131px;top:7px" width="16" height="16" viewBox="0 0 16 16"><rect width="16" height="16" fill="#7E7C12"/><circle cx="8" cy="8" r="4.6" fill="#F8F8F0" stroke="#fff" stroke-width="1"/><path d="M8 5v3.4h2.8" stroke="#6E6C10" stroke-width="1.3" fill="none"/><path d="M1.5 4V1.5H4M12 1.5h2.5V4M1.5 12v2.5H4M12 14.5h2.5V12" stroke="#E8E8C0" stroke-width="1.2" fill="none"/></svg>
<svg style="left:153px;top:6px" width="17" height="17" viewBox="0 0 17 17"><ellipse cx="8.5" cy="9" rx="8.2" ry="3.6" fill="none" stroke="#7CC4FA" stroke-width="1.6" transform="rotate(-32 8.5 9)"/><text x="1.6" y="15.2" font-family="Liberation Sans, sans-serif" font-weight="bold" font-size="22" fill="#3CA0F6">e</text><path d="M1.5 11.5Q4 9 8 6.5" stroke="#9AD4FC" stroke-width="1.2" fill="none"/></svg>
<svg style="left:176px;top:5px" width="17" height="18" viewBox="0 0 17 18"><g transform="rotate(-6 8 9)"><rect x="1.5" y="2.5" width="12.5" height="14" rx="2.5" fill="#F4F8FF" stroke="#2A6AD8" stroke-width="1.8"/><rect x="4" y="5" width="7.5" height="8" fill="#D8E8FC" stroke="#5A8AD8" stroke-width=".8"/><path d="M5.4 11.4l5.4-5.8" stroke="#203050" stroke-width="1.6"/><path d="M4.6 12.6l1.4-.4-1-.9z" fill="#203050"/></g><circle cx="14.2" cy="5" r="1.7" fill="#F06020"/></svg>
<div style="left:234px;top:4px;width:129px;height:23px;border-radius:3px;background:linear-gradient(to bottom,#5A9AF8 0%,#3F86F5 12%,#3C81F3 50%,#3A7EEF 85%,#2F6CDC 100%);box-shadow:inset 1px 0 0 #4E90F6,inset -1px 0 0 #2E68D4">
<svg style="left:9px;top:3px" width="16" height="16" viewBox="0 0 16 16"><rect x=".5" y=".5" width="15" height="15" fill="#8FC8F0" stroke="#D8D4C0" stroke-width="1"/><path d="M1 9q3-5 6-2t4-1l4 2v7H1z" fill="#2E7A2E"/><path d="M1 11q4-3 7 0t7 0v4H1z" fill="#5AA83C"/><path d="M9 12l6-2v5H6z" fill="#E8D890"/><path d="M1 3h14v2H1z" fill="#B8E0F8"/></svg>
<div style="left:27.7px;top:5px;font:11px/14px 'Liberation Sans',sans-serif;color:#fff;white-space:nowrap;letter-spacing:0.06px">7 - Программа ...</div>
</div>
<div style="left:364px;top:4px;width:129px;height:23px;border-radius:3px;background:linear-gradient(to bottom,#5A9AF8 0%,#3F86F5 12%,#3C81F3 50%,#3A7EEF 85%,#2F6CDC 100%);box-shadow:inset 1px 0 0 #4E90F6,inset -1px 0 0 #2E68D4">
<svg style="left:9px;top:3px" width="17" height="17" viewBox="0 0 17 17"><path d="M5 1.5h8l3 3v11H5z" fill="#fff" stroke="#606060" stroke-width="1"/><path d="M7 7h7M7 9h7M7 11h7M7 13h7" stroke="#A0A0A0" stroke-width=".8"/><rect x=".8" y="2.8" width="9.4" height="8.4" fill="#fff" stroke="#1020A0" stroke-width="1.6"/><path d="M2.6 4.6l1.4 5 1.5-4 1.5 4 1.4-5" stroke="#1020A0" stroke-width="1.5" fill="none"/></svg>
<div style="left:28.7px;top:5px;font:11px/14px 'Liberation Sans',sans-serif;color:#fff;white-space:nowrap;letter-spacing:0px">Обзор1 - Micro...</div>
</div>
<div style="left:495px;top:4px;width:129px;height:23px;border-radius:3px;background:linear-gradient(to bottom,#5A9AF8 0%,#3F86F5 12%,#3C81F3 50%,#3A7EEF 85%,#2F6CDC 100%);box-shadow:inset 1px 0 0 #4E90F6,inset -1px 0 0 #2E68D4">
<svg style="left:10px;top:2px" width="14" height="19" viewBox="0 0 14 19"><path d="M2.5 8h9l-1.2 9.5h-6.6z" fill="#C8D0D8" stroke="#8890A0" stroke-width=".8" opacity=".9"/><path d="M2 1.5l4 12" stroke="#D84818" stroke-width="2"/><path d="M7 2v12" stroke="#E8B018" stroke-width="2"/><path d="M12 1.5L8.4 14" stroke="#58A030" stroke-width="2"/><path d="M1.4 .6l1.6 2.6" stroke="#803010" stroke-width="2.2"/><path d="M12.4 .8l-1 2.6" stroke="#D8D8E0" stroke-width="2"/></svg>
<div style="left:27.5px;top:5px;font:11px/14px 'Liberation Sans',sans-serif;color:#fff;white-space:nowrap;letter-spacing:0px">Безымянный - ...</div>
</div>
<div style="left:626px;top:4px;width:129px;height:23px;border-radius:3px;background:linear-gradient(to bottom,#5A9AF8 0%,#3F86F5 12%,#3C81F3 50%,#3A7EEF 85%,#2F6CDC 100%);box-shadow:inset 1px 0 0 #4E90F6,inset -1px 0 0 #2E68D4">
<svg style="left:8px;top:3px" width="17" height="17" viewBox="0 0 17 17"><circle cx="8.5" cy="8.5" r="8" fill="#F8F8F8"/><path d="M8.5 .5A8 8 0 0 1 16.5 8.5H12A3.5 3.5 0 0 0 8.5 5z" fill="#F0A020"/><path d="M16.5 8.5A8 8 0 0 1 8.5 16.5V12A3.5 3.5 0 0 0 12 8.5z" fill="#58B030"/><path d="M8.5 16.5A8 8 0 0 1 .5 8.5H5A3.5 3.5 0 0 0 8.5 12z" fill="#3878E0"/><path d="M.5 8.5A8 8 0 0 1 8.5 .5V5A3.5 3.5 0 0 0 5 8.5z" fill="#E84820"/><circle cx="8.5" cy="8.5" r="4.6" fill="#F4F4F4"/><path d="M6.6 5.4L12 8.5 6.6 11.6z" fill="#202020"/></svg>
<div style="left:28px;top:5px;font:11px/14px 'Liberation Sans',sans-serif;color:#fff;white-space:nowrap;letter-spacing:0.45px">Проигрывател...</div>
</div>
<div style="left:756px;top:4px;width:131px;height:23px;border-radius:3px;background:#1E52B7;box-shadow:inset 1px 1px 1px #163E8E,inset -1px -1px 0 #2A60C8">
<svg style="left:9px;top:3px" width="16" height="16" viewBox="0 0 16 16"><circle cx="8" cy="8" r="7.3" fill="#fff" stroke="#000" stroke-width="1.3"/><circle cx="8" cy="9" r="4.8" fill="none" stroke="#000" stroke-width="1.2"/><path d="M4 3.4h8L8.7 9v3H7.3V9z" fill="#00E0E8" stroke="#1030D0" stroke-width="0.9"/></svg>
<div style="left:29.5px;top:5px;font:11px/14px 'Liberation Sans',sans-serif;color:#fff;white-space:nowrap;letter-spacing:-0.6px">MMANA</div>
</div>
<div style="left:896px;top:7px;width:16px;height:16px;background:#3E6FD2"><div style="left:1px;top:2px;font:11px/13px 'Liberation Sans',sans-serif;color:#fff;letter-spacing:-0.3px">EN</div></div>
<div style="left:931px;top:0;width:93px;height:30px;border-left:1px solid #1042af;background:linear-gradient(to bottom,#0c59b9 1%,#139ee9 6%,#18b5f2 10%,#139beb 14%,#1290e8 19%,#0d8dea 63%,#0d9ff1 81%,#0f9eed 88%,#119be9 91%,#1392e2 94%,#137ed7 97%,#095bc9 100%);box-shadow:inset 1px 0 1px #18bbff">
<svg style="left:10px;top:6px" width="17" height="18" viewBox="0 0 17 18"><ellipse cx="6.5" cy="7.5" rx="5.5" ry="6.5" fill="#707478" transform="rotate(-20 6.5 7.5)"/><ellipse cx="5.6" cy="7.3" rx="3.6" ry="4.6" fill="#A8ACB0" transform="rotate(-20 5.6 7.3)"/><ellipse cx="5.4" cy="7.2" rx="1.8" ry="2.4" fill="#505458" transform="rotate(-20 5.4 7.2)"/><path d="M9 16q4-2 6-6M11 17q3-1.6 5-5" stroke="#A8A0E8" stroke-width="1" fill="none"/></svg>
<svg style="left:28px;top:5px" width="18" height="20" viewBox="0 0 18 20"><circle cx="10.5" cy="4.5" r="3.2" fill="#3E9A3E"/><path d="M5 15c0-5 2.6-7.4 5.6-7.4s5 2.4 5 7.4z" fill="#4AA84A"/><circle cx="4.6" cy="6" r="2.4" fill="#E8F0F8"/><path d="M1 14c0-4 1.6-5.6 3.8-5.6S8.4 10 8.4 14z" fill="#D8E4F0"/><circle cx="12.5" cy="14" r="4.2" fill="#E83020" stroke="#fff" stroke-width=".8"/><path d="M10.7 12.2l3.6 3.6M14.3 12.2l-3.6 3.6" stroke="#fff" stroke-width="1.4"/></svg>
<div style="left:51px;top:9px;font:11px/13px 'Liberation Sans',sans-serif;color:#fff;white-space:nowrap;letter-spacing:-0.1px">19:42</div>
</div>
</div>
</body></html>
